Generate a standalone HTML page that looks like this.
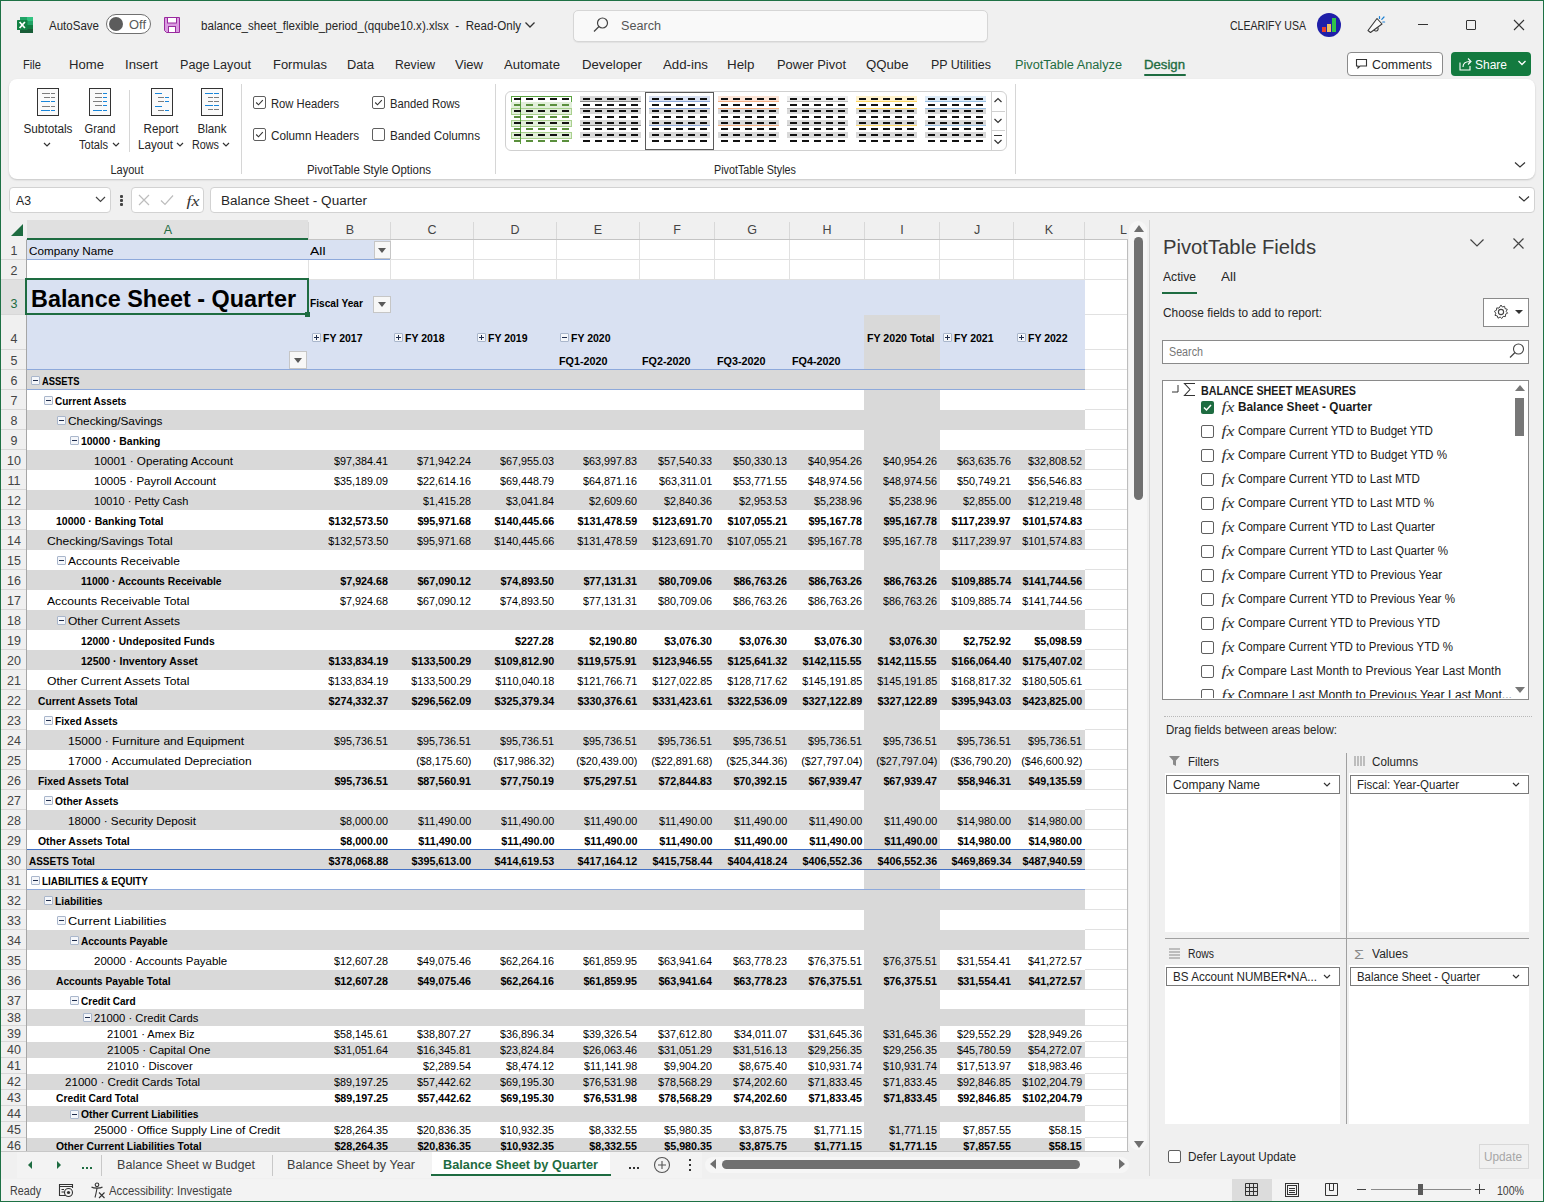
<!DOCTYPE html><html><head><meta charset="utf-8"><style>html,body{margin:0;padding:0;}body{width:1544px;height:1202px;overflow:hidden;position:relative;background:#f0f0f0;font-family:"Liberation Sans",sans-serif;}.t{position:absolute;line-height:40px;height:40px;white-space:pre;font-family:"Liberation Sans",sans-serif;}</style></head><body><svg style="position:absolute;left:17px;top:17px" width="17" height="16"><rect x="3" y="0" width="13" height="4" fill="#21a366"/><rect x="10" y="0" width="6" height="4" fill="#33c481"/><rect x="3" y="4" width="13" height="4" fill="#21a366"/><rect x="3" y="8" width="13" height="4" fill="#107c41"/><rect x="3" y="12" width="13" height="4" fill="#185c37"/><rect x="0" y="3" width="10.5" height="10" rx="0.6" fill="#118043"/><path d="M2.6 5 L7.9 11 M7.9 5 L2.6 11" stroke="#fff" stroke-width="1.7"/></svg><div class="t" style="left:49px;top:6px;font-size:12px;color:#262626;transform:scaleX(0.9607);transform-origin:left;">AutoSave</div><div style="position:absolute;left:106px;top:14px;width:43px;height:18px;border:1px solid #707070;border-radius:10px;background:#fff"></div><div style="position:absolute;left:109px;top:17px;width:14px;height:14px;background:#5c5c5c;border-radius:50%"></div><div class="t" style="left:129px;top:5px;font-size:12px;color:#5a5a5a;transform:scaleX(1.0762);transform-origin:left;">Off</div><svg style="position:absolute;left:163px;top:16px" width="18" height="18"><path d="M1.5 1.5 H16.5 V16.5 H3.5 L1.5 14.5 Z" fill="#d99be0" stroke="#9a2a9f" stroke-width="1"/><rect x="4.5" y="1.5" width="9" height="5.5" fill="#fff" stroke="#9a2a9f" stroke-width="1"/><rect x="5.5" y="10.5" width="7" height="6" fill="#fff" stroke="#9a2a9f" stroke-width="1"/></svg><div class="t" style="left:201px;top:6px;font-size:12px;color:#262626;transform:scaleX(0.9652);transform-origin:left;">balance_sheet_flexible_period_(qqube10.x).xlsx  -  Read-Only</div><svg style="position:absolute;left:524px;top:20px" width="12" height="10"><path d="M1.5 2.5 L6 7 L10.5 2.5" stroke="#333" stroke-width="1.3" fill="none"/></svg><div style="position:absolute;left:573px;top:10px;width:413px;height:30px;background:#f9f9f9;border:1px solid #d6d6d6;border-radius:5px;box-shadow:0 1px 1px rgba(0,0,0,0.06)"></div><svg style="position:absolute;left:592px;top:16px" width="18" height="18"><circle cx="10.5" cy="7" r="5" stroke="#444" stroke-width="1.2" fill="none"/><path d="M7 10.5 L2 15.5" stroke="#444" stroke-width="1.3"/></svg><div class="t" style="left:621px;top:6px;font-size:12.5px;color:#555;transform:scaleX(1.0099);transform-origin:left;">Search</div><div class="t" style="left:1230px;top:6px;font-size:12px;color:#262626;transform:scaleX(0.8788);transform-origin:left;">CLEARIFY USA</div><div style="position:absolute;left:1317px;top:13px;width:24px;height:24px;background:#1f1fa8;border-radius:50%"></div><div style="position:absolute;left:1322px;top:27px;width:4px;height:5px;background:#e8412c"></div><div style="position:absolute;left:1327px;top:24px;width:4px;height:8px;background:#f0c060"></div><div style="position:absolute;left:1332px;top:18px;width:4px;height:14px;background:#31c24a"></div><svg style="position:absolute;left:1366px;top:15px" width="22" height="20"><path d="M2 15.5 L11 3.5 L16 9 L4.5 17.5 Z" stroke="#3a3a3a" stroke-width="1.1" fill="#fafafa" stroke-linejoin="round"/><path d="M8 15 A1.9 1.9 0 1 0 11.8 12.6" stroke="#3a3a3a" stroke-width="1.1" fill="none"/><path d="M13.5 1.5 V3.5 M15.8 4.3 L18 2 M16.8 7 H18.6" stroke="#1a7fd4" stroke-width="1.2" stroke-linecap="round"/></svg><div style="position:absolute;left:1418px;top:24px;width:10px;height:1px;background:#333"></div><div style="position:absolute;left:1466px;top:20px;width:8px;height:8px;border:1px solid #333;border-radius:1px"></div><svg style="position:absolute;left:1513px;top:19px" width="12" height="12"><path d="M1 1 L11 11 M11 1 L1 11" stroke="#333" stroke-width="1.1"/></svg><div class="t" style="left:23px;top:45px;font-size:12.5px;color:#262626;transform:scaleX(0.8930);transform-origin:left;">File</div><div class="t" style="left:69px;top:45px;font-size:12.5px;color:#262626;transform:scaleX(1.0497);transform-origin:left;">Home</div><div class="t" style="left:125px;top:45px;font-size:12.5px;color:#262626;transform:scaleX(1.0555);transform-origin:left;">Insert</div><div class="t" style="left:180px;top:45px;font-size:12.5px;color:#262626;transform:scaleX(1.0114);transform-origin:left;">Page Layout</div><div class="t" style="left:273px;top:45px;font-size:12.5px;color:#262626;transform:scaleX(1.0366);transform-origin:left;">Formulas</div><div class="t" style="left:347px;top:45px;font-size:12.5px;color:#262626;transform:scaleX(1.0225);transform-origin:left;">Data</div><div class="t" style="left:395px;top:45px;font-size:12.5px;color:#262626;transform:scaleX(0.9756);transform-origin:left;">Review</div><div class="t" style="left:455px;top:45px;font-size:12.5px;color:#262626;transform:scaleX(1.0419);transform-origin:left;">View</div><div class="t" style="left:504px;top:45px;font-size:12.5px;color:#262626;transform:scaleX(1.0464);transform-origin:left;">Automate</div><div class="t" style="left:582px;top:45px;font-size:12.5px;color:#262626;transform:scaleX(1.0529);transform-origin:left;">Developer</div><div class="t" style="left:663px;top:45px;font-size:12.5px;color:#262626;transform:scaleX(1.0616);transform-origin:left;">Add-ins</div><div class="t" style="left:727px;top:45px;font-size:12.5px;color:#262626;transform:scaleX(1.0693);transform-origin:left;">Help</div><div class="t" style="left:777px;top:45px;font-size:12.5px;color:#262626;transform:scaleX(1.0344);transform-origin:left;">Power Pivot</div><div class="t" style="left:866px;top:45px;font-size:12.5px;color:#262626;transform:scaleX(1.0543);transform-origin:left;">QQube</div><div class="t" style="left:931px;top:45px;font-size:12.5px;color:#262626;transform:scaleX(0.9964);transform-origin:left;">PP Utilities</div><div class="t" style="left:1015px;top:45px;font-size:12.5px;color:#1e6c41;transform:scaleX(1.0197);transform-origin:left;">PivotTable Analyze</div><div class="t" style="left:1144px;top:45px;font-size:12.5px;color:#1e6c41;transform:scaleX(1.0534);transform-origin:left;-webkit-text-stroke:0.35px #1e6c41;">Design</div><div style="position:absolute;left:1144px;top:74px;width:42px;height:2px;background:#1e6c41;border-radius:1px"></div><div style="position:absolute;left:1347px;top:52px;width:94px;height:22px;background:#fff;border:1px solid #8a8a8a;border-radius:4px"></div><svg style="position:absolute;left:1355px;top:57px" width="14" height="14"><path d="M1.5 2.5 H11.5 V9 H5 L3 11 V9 H1.5 Z" stroke="#333" stroke-width="1.1" fill="none"/></svg><div class="t" style="left:1372px;top:45px;font-size:12.5px;color:#262626;transform:scaleX(0.9928);transform-origin:left;">Comments</div><div style="position:absolute;left:1451px;top:52px;width:80px;height:24px;background:#137a3f;border-radius:4px"></div><svg style="position:absolute;left:1458px;top:56px" width="16" height="16"><path d="M2 6.5 V14 H12 V10" stroke="#fff" stroke-width="1.1" fill="none"/><path d="M5 11 C5 7 8 5.5 12 5.5 M10 2.5 L13 5.5 L10 8.5" stroke="#fff" stroke-width="1.1" fill="none"/></svg><div class="t" style="left:1475px;top:45px;font-size:12.5px;color:#fff;transform:scaleX(0.9593);transform-origin:left;">Share</div><svg style="position:absolute;left:1517px;top:59px" width="10" height="8"><path d="M1.5 2 L5 5.5 L8.5 2" stroke="#fff" stroke-width="1.3" fill="none"/></svg><div style="position:absolute;left:9px;top:79px;width:1526px;height:100px;background:#fff;border-radius:8px;box-shadow:0 1px 2px rgba(0,0,0,0.18)"></div><div style="position:absolute;left:37px;top:88px;width:20px;height:26px;background:#fafafa;border:1px solid #333"></div><div style="position:absolute;left:42px;top:93px;width:8px;height:1px;background:#7d7d7d"></div><div style="position:absolute;left:51px;top:93px;width:4px;height:1px;background:#7d7d7d"></div><div style="position:absolute;left:44px;top:97px;width:6px;height:1px;background:#7d7d7d"></div><div style="position:absolute;left:51px;top:97px;width:4px;height:1px;background:#7d7d7d"></div><div style="position:absolute;left:41px;top:101px;width:9px;height:1px;background:#1a86d9"></div><div style="position:absolute;left:51px;top:101px;width:4px;height:1px;background:#1a86d9"></div><div style="position:absolute;left:42px;top:106px;width:8px;height:1px;background:#7d7d7d"></div><div style="position:absolute;left:51px;top:106px;width:4px;height:1px;background:#7d7d7d"></div><div style="position:absolute;left:41px;top:110px;width:9px;height:1px;background:#1a86d9"></div><div style="position:absolute;left:51px;top:110px;width:4px;height:1px;background:#1a86d9"></div><div style="position:absolute;left:89px;top:88px;width:20px;height:26px;background:#fafafa;border:1px solid #333"></div><div style="position:absolute;left:95px;top:93px;width:7px;height:1px;background:#7d7d7d"></div><div style="position:absolute;left:103px;top:93px;width:4px;height:1px;background:#1a86d9"></div><div style="position:absolute;left:95px;top:97px;width:7px;height:1px;background:#7d7d7d"></div><div style="position:absolute;left:103px;top:97px;width:4px;height:1px;background:#1a86d9"></div><div style="position:absolute;left:93px;top:101px;width:9px;height:1px;background:#7d7d7d"></div><div style="position:absolute;left:103px;top:101px;width:4px;height:1px;background:#1a86d9"></div><div style="position:absolute;left:95px;top:105px;width:7px;height:1px;background:#7d7d7d"></div><div style="position:absolute;left:103px;top:105px;width:4px;height:1px;background:#1a86d9"></div><div style="position:absolute;left:93px;top:110px;width:9px;height:1px;background:#1a86d9"></div><div style="position:absolute;left:103px;top:110px;width:4px;height:1px;background:#1a86d9"></div><div style="position:absolute;left:151px;top:88px;width:20px;height:26px;background:#fafafa;border:1px solid #333"></div><div style="position:absolute;left:155px;top:93px;width:7px;height:1px;background:#1a86d9"></div><div style="position:absolute;left:158px;top:97px;width:6px;height:1px;background:#7d7d7d"></div><div style="position:absolute;left:165px;top:97px;width:4px;height:1px;background:#1a86d9"></div><div style="position:absolute;left:158px;top:101px;width:6px;height:1px;background:#7d7d7d"></div><div style="position:absolute;left:165px;top:101px;width:4px;height:1px;background:#1a86d9"></div><div style="position:absolute;left:155px;top:106px;width:7px;height:1px;background:#1a86d9"></div><div style="position:absolute;left:158px;top:110px;width:6px;height:1px;background:#7d7d7d"></div><div style="position:absolute;left:165px;top:110px;width:4px;height:1px;background:#1a86d9"></div><div style="position:absolute;left:201px;top:88px;width:20px;height:26px;background:#fafafa;border:1px solid #333"></div><div style="position:absolute;left:205px;top:93px;width:8px;height:1px;background:#1a86d9"></div><div style="position:absolute;left:214px;top:93px;width:5px;height:1px;background:#1a86d9"></div><div style="position:absolute;left:208px;top:97px;width:5px;height:1px;background:#7d7d7d"></div><div style="position:absolute;left:214px;top:97px;width:5px;height:1px;background:#7d7d7d"></div><div style="position:absolute;left:208px;top:101px;width:5px;height:1px;background:#7d7d7d"></div><div style="position:absolute;left:214px;top:101px;width:5px;height:1px;background:#7d7d7d"></div><div style="position:absolute;left:205px;top:105px;width:8px;height:1px;background:#1a86d9"></div><div style="position:absolute;left:214px;top:105px;width:5px;height:1px;background:#1a86d9"></div><div style="position:absolute;left:208px;top:109px;width:5px;height:1px;background:#7d7d7d"></div><div style="position:absolute;left:214px;top:109px;width:5px;height:1px;background:#7d7d7d"></div><div style="position:absolute;left:129px;top:90px;width:1px;height:62px;background:#d6d6d6"></div><div class="t" style="left:-252px;width:600px;text-align:center;top:109px;font-size:12px;color:#262626;transform:scaleX(0.9791);transform-origin:center;">Subtotals</div><svg style="position:absolute;left:43px;top:142px" width="8" height="6"><path d="M1 1 L4.0 4.0 L7 1" stroke="#333" stroke-width="1.2" fill="none"/></svg><div class="t" style="left:-200px;width:600px;text-align:center;top:109px;font-size:12px;color:#262626;transform:scaleX(0.9293);transform-origin:center;">Grand</div><div class="t" style="left:79px;top:125px;font-size:12px;color:#262626;transform:scaleX(0.9248);transform-origin:left;">Totals</div><svg style="position:absolute;left:112px;top:142px" width="8" height="6"><path d="M1 1 L4.0 4.0 L7 1" stroke="#333" stroke-width="1.2" fill="none"/></svg><div class="t" style="left:-139px;width:600px;text-align:center;top:109px;font-size:12px;color:#262626;transform:scaleX(0.9714);transform-origin:center;">Report</div><div class="t" style="left:138px;top:125px;font-size:12px;color:#262626;transform:scaleX(0.9714);transform-origin:left;">Layout</div><svg style="position:absolute;left:176px;top:142px" width="8" height="6"><path d="M1 1 L4.0 4.0 L7 1" stroke="#333" stroke-width="1.2" fill="none"/></svg><div class="t" style="left:-88px;width:600px;text-align:center;top:109px;font-size:12px;color:#262626;transform:scaleX(0.9657);transform-origin:center;">Blank</div><div class="t" style="left:192px;top:125px;font-size:12px;color:#262626;transform:scaleX(0.8995);transform-origin:left;">Rows</div><svg style="position:absolute;left:222px;top:142px" width="8" height="6"><path d="M1 1 L4.0 4.0 L7 1" stroke="#333" stroke-width="1.2" fill="none"/></svg><div class="t" style="left:-173px;width:600px;text-align:center;top:150px;font-size:12px;color:#262626;transform:scaleX(0.9159);transform-origin:center;">Layout</div><div style="position:absolute;left:241px;top:84px;width:1px;height:90px;background:#d6d6d6"></div><div style="position:absolute;left:253px;top:96px;width:11px;height:11px;border:1px solid #5f5f5f;border-radius:2px;background:#fff"></div><svg style="position:absolute;left:253px;top:96px" width="13" height="13"><path d="M3.2 6.5 L5.5 8.8 L9.8 4.2" stroke="#333" stroke-width="1.1" fill="none"/></svg><div class="t" style="left:271px;top:84px;font-size:12px;color:#262626;transform:scaleX(0.9353);transform-origin:left;">Row Headers</div><div style="position:absolute;left:253px;top:128px;width:11px;height:11px;border:1px solid #5f5f5f;border-radius:2px;background:#fff"></div><svg style="position:absolute;left:253px;top:128px" width="13" height="13"><path d="M3.2 6.5 L5.5 8.8 L9.8 4.2" stroke="#333" stroke-width="1.1" fill="none"/></svg><div class="t" style="left:271px;top:116px;font-size:12px;color:#262626;transform:scaleX(0.9773);transform-origin:left;">Column Headers</div><div style="position:absolute;left:372px;top:96px;width:11px;height:11px;border:1px solid #5f5f5f;border-radius:2px;background:#fff"></div><svg style="position:absolute;left:372px;top:96px" width="13" height="13"><path d="M3.2 6.5 L5.5 8.8 L9.8 4.2" stroke="#333" stroke-width="1.1" fill="none"/></svg><div class="t" style="left:390px;top:84px;font-size:12px;color:#262626;transform:scaleX(0.9368);transform-origin:left;">Banded Rows</div><div style="position:absolute;left:372px;top:128px;width:11px;height:11px;border:1px solid #5f5f5f;border-radius:2px;background:#fff"></div><div class="t" style="left:390px;top:116px;font-size:12px;color:#262626;transform:scaleX(0.9776);transform-origin:left;">Banded Columns</div><div class="t" style="left:69px;width:600px;text-align:center;top:150px;font-size:12px;color:#262626;transform:scaleX(0.9533);transform-origin:center;">PivotTable Style Options</div><div style="position:absolute;left:495px;top:84px;width:1px;height:90px;background:#d6d6d6"></div><div style="position:absolute;left:505px;top:91px;width:500px;height:58px;border:1px solid #d0d0d0;border-radius:6px;background:#fff"></div><div style="position:absolute;left:511px;top:96px;width:59px;height:5px;border:1px solid #5aa33f;background:#fff"></div><div style="position:absolute;left:511px;top:108px;width:59px;height:5px;border:1px solid #a9d08e;background:#e2efda"></div><div style="position:absolute;left:511px;top:120px;width:59px;height:5px;border:1px solid #a9d08e;background:#e2efda"></div><div style="position:absolute;left:511px;top:132px;width:59px;height:5px;border:1px solid #a9d08e;background:#e2efda"></div><div style="position:absolute;left:511px;top:102px;width:61px;height:6px;background:#e2efda"></div><div style="position:absolute;left:520px;top:96px;width:1px;height:48px;background:#5aa33f"></div><div style="position:absolute;left:514px;top:98px;width:7px;height:2px;background:#111"></div><div style="position:absolute;left:526px;top:98px;width:7px;height:2px;background:#111"></div><div style="position:absolute;left:538px;top:98px;width:7px;height:2px;background:#111"></div><div style="position:absolute;left:550px;top:98px;width:7px;height:2px;background:#111"></div><div style="position:absolute;left:562px;top:98px;width:7px;height:2px;background:#111"></div><div style="position:absolute;left:514px;top:104px;width:7px;height:2px;background:#5a8f3c"></div><div style="position:absolute;left:526px;top:104px;width:7px;height:2px;background:#5a8f3c"></div><div style="position:absolute;left:538px;top:104px;width:7px;height:2px;background:#5a8f3c"></div><div style="position:absolute;left:550px;top:104px;width:7px;height:2px;background:#5a8f3c"></div><div style="position:absolute;left:562px;top:104px;width:7px;height:2px;background:#5a8f3c"></div><div style="position:absolute;left:514px;top:110px;width:7px;height:2px;background:#111"></div><div style="position:absolute;left:526px;top:110px;width:7px;height:2px;background:#111"></div><div style="position:absolute;left:538px;top:110px;width:7px;height:2px;background:#111"></div><div style="position:absolute;left:550px;top:110px;width:7px;height:2px;background:#111"></div><div style="position:absolute;left:562px;top:110px;width:7px;height:2px;background:#111"></div><div style="position:absolute;left:514px;top:116px;width:7px;height:2px;background:#5a8f3c"></div><div style="position:absolute;left:526px;top:116px;width:7px;height:2px;background:#5a8f3c"></div><div style="position:absolute;left:538px;top:116px;width:7px;height:2px;background:#5a8f3c"></div><div style="position:absolute;left:550px;top:116px;width:7px;height:2px;background:#5a8f3c"></div><div style="position:absolute;left:562px;top:116px;width:7px;height:2px;background:#5a8f3c"></div><div style="position:absolute;left:514px;top:122px;width:7px;height:2px;background:#111"></div><div style="position:absolute;left:526px;top:122px;width:7px;height:2px;background:#111"></div><div style="position:absolute;left:538px;top:122px;width:7px;height:2px;background:#111"></div><div style="position:absolute;left:550px;top:122px;width:7px;height:2px;background:#111"></div><div style="position:absolute;left:562px;top:122px;width:7px;height:2px;background:#111"></div><div style="position:absolute;left:514px;top:128px;width:7px;height:2px;background:#5a8f3c"></div><div style="position:absolute;left:526px;top:128px;width:7px;height:2px;background:#5a8f3c"></div><div style="position:absolute;left:538px;top:128px;width:7px;height:2px;background:#5a8f3c"></div><div style="position:absolute;left:550px;top:128px;width:7px;height:2px;background:#5a8f3c"></div><div style="position:absolute;left:562px;top:128px;width:7px;height:2px;background:#5a8f3c"></div><div style="position:absolute;left:514px;top:134px;width:7px;height:2px;background:#111"></div><div style="position:absolute;left:526px;top:134px;width:7px;height:2px;background:#111"></div><div style="position:absolute;left:538px;top:134px;width:7px;height:2px;background:#111"></div><div style="position:absolute;left:550px;top:134px;width:7px;height:2px;background:#111"></div><div style="position:absolute;left:562px;top:134px;width:7px;height:2px;background:#111"></div><div style="position:absolute;left:514px;top:140px;width:7px;height:2px;background:#5a8f3c"></div><div style="position:absolute;left:526px;top:140px;width:7px;height:2px;background:#5a8f3c"></div><div style="position:absolute;left:538px;top:140px;width:7px;height:2px;background:#5a8f3c"></div><div style="position:absolute;left:550px;top:140px;width:7px;height:2px;background:#5a8f3c"></div><div style="position:absolute;left:562px;top:140px;width:7px;height:2px;background:#5a8f3c"></div><div style="position:absolute;left:580px;top:96px;width:61px;height:6px;background:#d9d9d9"></div><div style="position:absolute;left:580px;top:108px;width:61px;height:6px;background:#d9d9d9"></div><div style="position:absolute;left:580px;top:120px;width:61px;height:6px;background:#d9d9d9"></div><div style="position:absolute;left:580px;top:132px;width:61px;height:6px;background:#d9d9d9"></div><div style="position:absolute;left:580px;top:101px;width:61px;height:1px;background:#8c8c8c"></div><div style="position:absolute;left:580px;top:108px;width:61px;height:1px;background:#8c8c8c"></div><div style="position:absolute;left:580px;top:125px;width:61px;height:1px;background:#8c8c8c"></div><div style="position:absolute;left:583px;top:98px;width:7px;height:2px;background:#111"></div><div style="position:absolute;left:595px;top:98px;width:7px;height:2px;background:#111"></div><div style="position:absolute;left:607px;top:98px;width:7px;height:2px;background:#111"></div><div style="position:absolute;left:619px;top:98px;width:7px;height:2px;background:#111"></div><div style="position:absolute;left:631px;top:98px;width:7px;height:2px;background:#111"></div><div style="position:absolute;left:583px;top:104px;width:7px;height:2px;background:#111"></div><div style="position:absolute;left:595px;top:104px;width:7px;height:2px;background:#111"></div><div style="position:absolute;left:607px;top:104px;width:7px;height:2px;background:#111"></div><div style="position:absolute;left:619px;top:104px;width:7px;height:2px;background:#111"></div><div style="position:absolute;left:631px;top:104px;width:7px;height:2px;background:#111"></div><div style="position:absolute;left:583px;top:110px;width:7px;height:2px;background:#111"></div><div style="position:absolute;left:595px;top:110px;width:7px;height:2px;background:#111"></div><div style="position:absolute;left:607px;top:110px;width:7px;height:2px;background:#111"></div><div style="position:absolute;left:619px;top:110px;width:7px;height:2px;background:#111"></div><div style="position:absolute;left:631px;top:110px;width:7px;height:2px;background:#111"></div><div style="position:absolute;left:583px;top:116px;width:7px;height:2px;background:#111"></div><div style="position:absolute;left:595px;top:116px;width:7px;height:2px;background:#111"></div><div style="position:absolute;left:607px;top:116px;width:7px;height:2px;background:#111"></div><div style="position:absolute;left:619px;top:116px;width:7px;height:2px;background:#111"></div><div style="position:absolute;left:631px;top:116px;width:7px;height:2px;background:#111"></div><div style="position:absolute;left:583px;top:122px;width:7px;height:2px;background:#111"></div><div style="position:absolute;left:595px;top:122px;width:7px;height:2px;background:#111"></div><div style="position:absolute;left:607px;top:122px;width:7px;height:2px;background:#111"></div><div style="position:absolute;left:619px;top:122px;width:7px;height:2px;background:#111"></div><div style="position:absolute;left:631px;top:122px;width:7px;height:2px;background:#111"></div><div style="position:absolute;left:583px;top:128px;width:7px;height:2px;background:#111"></div><div style="position:absolute;left:595px;top:128px;width:7px;height:2px;background:#111"></div><div style="position:absolute;left:607px;top:128px;width:7px;height:2px;background:#111"></div><div style="position:absolute;left:619px;top:128px;width:7px;height:2px;background:#111"></div><div style="position:absolute;left:631px;top:128px;width:7px;height:2px;background:#111"></div><div style="position:absolute;left:583px;top:134px;width:7px;height:2px;background:#111"></div><div style="position:absolute;left:595px;top:134px;width:7px;height:2px;background:#111"></div><div style="position:absolute;left:607px;top:134px;width:7px;height:2px;background:#111"></div><div style="position:absolute;left:619px;top:134px;width:7px;height:2px;background:#111"></div><div style="position:absolute;left:631px;top:134px;width:7px;height:2px;background:#111"></div><div style="position:absolute;left:583px;top:140px;width:7px;height:2px;background:#111"></div><div style="position:absolute;left:595px;top:140px;width:7px;height:2px;background:#111"></div><div style="position:absolute;left:607px;top:140px;width:7px;height:2px;background:#111"></div><div style="position:absolute;left:619px;top:140px;width:7px;height:2px;background:#111"></div><div style="position:absolute;left:631px;top:140px;width:7px;height:2px;background:#111"></div><div style="position:absolute;left:649px;top:96px;width:61px;height:6px;background:#d9e1f2"></div><div style="position:absolute;left:649px;top:108px;width:61px;height:6px;background:#d9d9d9"></div><div style="position:absolute;left:649px;top:120px;width:61px;height:6px;background:#d9d9d9"></div><div style="position:absolute;left:649px;top:132px;width:61px;height:6px;background:#d9d9d9"></div><div style="position:absolute;left:649px;top:101px;width:61px;height:1px;background:#8ea9db"></div><div style="position:absolute;left:649px;top:108px;width:61px;height:1px;background:#8ea9db"></div><div style="position:absolute;left:649px;top:125px;width:61px;height:1px;background:#8ea9db"></div><div style="position:absolute;left:652px;top:98px;width:7px;height:2px;background:#111"></div><div style="position:absolute;left:664px;top:98px;width:7px;height:2px;background:#111"></div><div style="position:absolute;left:676px;top:98px;width:7px;height:2px;background:#111"></div><div style="position:absolute;left:688px;top:98px;width:7px;height:2px;background:#111"></div><div style="position:absolute;left:700px;top:98px;width:7px;height:2px;background:#111"></div><div style="position:absolute;left:652px;top:104px;width:7px;height:2px;background:#111"></div><div style="position:absolute;left:664px;top:104px;width:7px;height:2px;background:#111"></div><div style="position:absolute;left:676px;top:104px;width:7px;height:2px;background:#111"></div><div style="position:absolute;left:688px;top:104px;width:7px;height:2px;background:#111"></div><div style="position:absolute;left:700px;top:104px;width:7px;height:2px;background:#111"></div><div style="position:absolute;left:652px;top:110px;width:7px;height:2px;background:#111"></div><div style="position:absolute;left:664px;top:110px;width:7px;height:2px;background:#111"></div><div style="position:absolute;left:676px;top:110px;width:7px;height:2px;background:#111"></div><div style="position:absolute;left:688px;top:110px;width:7px;height:2px;background:#111"></div><div style="position:absolute;left:700px;top:110px;width:7px;height:2px;background:#111"></div><div style="position:absolute;left:652px;top:116px;width:7px;height:2px;background:#111"></div><div style="position:absolute;left:664px;top:116px;width:7px;height:2px;background:#111"></div><div style="position:absolute;left:676px;top:116px;width:7px;height:2px;background:#111"></div><div style="position:absolute;left:688px;top:116px;width:7px;height:2px;background:#111"></div><div style="position:absolute;left:700px;top:116px;width:7px;height:2px;background:#111"></div><div style="position:absolute;left:652px;top:122px;width:7px;height:2px;background:#111"></div><div style="position:absolute;left:664px;top:122px;width:7px;height:2px;background:#111"></div><div style="position:absolute;left:676px;top:122px;width:7px;height:2px;background:#111"></div><div style="position:absolute;left:688px;top:122px;width:7px;height:2px;background:#111"></div><div style="position:absolute;left:700px;top:122px;width:7px;height:2px;background:#111"></div><div style="position:absolute;left:652px;top:128px;width:7px;height:2px;background:#111"></div><div style="position:absolute;left:664px;top:128px;width:7px;height:2px;background:#111"></div><div style="position:absolute;left:676px;top:128px;width:7px;height:2px;background:#111"></div><div style="position:absolute;left:688px;top:128px;width:7px;height:2px;background:#111"></div><div style="position:absolute;left:700px;top:128px;width:7px;height:2px;background:#111"></div><div style="position:absolute;left:652px;top:134px;width:7px;height:2px;background:#111"></div><div style="position:absolute;left:664px;top:134px;width:7px;height:2px;background:#111"></div><div style="position:absolute;left:676px;top:134px;width:7px;height:2px;background:#111"></div><div style="position:absolute;left:688px;top:134px;width:7px;height:2px;background:#111"></div><div style="position:absolute;left:700px;top:134px;width:7px;height:2px;background:#111"></div><div style="position:absolute;left:652px;top:140px;width:7px;height:2px;background:#111"></div><div style="position:absolute;left:664px;top:140px;width:7px;height:2px;background:#111"></div><div style="position:absolute;left:676px;top:140px;width:7px;height:2px;background:#111"></div><div style="position:absolute;left:688px;top:140px;width:7px;height:2px;background:#111"></div><div style="position:absolute;left:700px;top:140px;width:7px;height:2px;background:#111"></div><div style="position:absolute;left:718px;top:96px;width:61px;height:6px;background:#fce4d6"></div><div style="position:absolute;left:718px;top:108px;width:61px;height:6px;background:#d9d9d9"></div><div style="position:absolute;left:718px;top:120px;width:61px;height:6px;background:#d9d9d9"></div><div style="position:absolute;left:718px;top:132px;width:61px;height:6px;background:#d9d9d9"></div><div style="position:absolute;left:718px;top:101px;width:61px;height:1px;background:#f4b084"></div><div style="position:absolute;left:718px;top:108px;width:61px;height:1px;background:#f4b084"></div><div style="position:absolute;left:718px;top:125px;width:61px;height:1px;background:#f4b084"></div><div style="position:absolute;left:721px;top:98px;width:7px;height:2px;background:#111"></div><div style="position:absolute;left:733px;top:98px;width:7px;height:2px;background:#111"></div><div style="position:absolute;left:745px;top:98px;width:7px;height:2px;background:#111"></div><div style="position:absolute;left:757px;top:98px;width:7px;height:2px;background:#111"></div><div style="position:absolute;left:769px;top:98px;width:7px;height:2px;background:#111"></div><div style="position:absolute;left:721px;top:104px;width:7px;height:2px;background:#111"></div><div style="position:absolute;left:733px;top:104px;width:7px;height:2px;background:#111"></div><div style="position:absolute;left:745px;top:104px;width:7px;height:2px;background:#111"></div><div style="position:absolute;left:757px;top:104px;width:7px;height:2px;background:#111"></div><div style="position:absolute;left:769px;top:104px;width:7px;height:2px;background:#111"></div><div style="position:absolute;left:721px;top:110px;width:7px;height:2px;background:#111"></div><div style="position:absolute;left:733px;top:110px;width:7px;height:2px;background:#111"></div><div style="position:absolute;left:745px;top:110px;width:7px;height:2px;background:#111"></div><div style="position:absolute;left:757px;top:110px;width:7px;height:2px;background:#111"></div><div style="position:absolute;left:769px;top:110px;width:7px;height:2px;background:#111"></div><div style="position:absolute;left:721px;top:116px;width:7px;height:2px;background:#111"></div><div style="position:absolute;left:733px;top:116px;width:7px;height:2px;background:#111"></div><div style="position:absolute;left:745px;top:116px;width:7px;height:2px;background:#111"></div><div style="position:absolute;left:757px;top:116px;width:7px;height:2px;background:#111"></div><div style="position:absolute;left:769px;top:116px;width:7px;height:2px;background:#111"></div><div style="position:absolute;left:721px;top:122px;width:7px;height:2px;background:#111"></div><div style="position:absolute;left:733px;top:122px;width:7px;height:2px;background:#111"></div><div style="position:absolute;left:745px;top:122px;width:7px;height:2px;background:#111"></div><div style="position:absolute;left:757px;top:122px;width:7px;height:2px;background:#111"></div><div style="position:absolute;left:769px;top:122px;width:7px;height:2px;background:#111"></div><div style="position:absolute;left:721px;top:128px;width:7px;height:2px;background:#111"></div><div style="position:absolute;left:733px;top:128px;width:7px;height:2px;background:#111"></div><div style="position:absolute;left:745px;top:128px;width:7px;height:2px;background:#111"></div><div style="position:absolute;left:757px;top:128px;width:7px;height:2px;background:#111"></div><div style="position:absolute;left:769px;top:128px;width:7px;height:2px;background:#111"></div><div style="position:absolute;left:721px;top:134px;width:7px;height:2px;background:#111"></div><div style="position:absolute;left:733px;top:134px;width:7px;height:2px;background:#111"></div><div style="position:absolute;left:745px;top:134px;width:7px;height:2px;background:#111"></div><div style="position:absolute;left:757px;top:134px;width:7px;height:2px;background:#111"></div><div style="position:absolute;left:769px;top:134px;width:7px;height:2px;background:#111"></div><div style="position:absolute;left:721px;top:140px;width:7px;height:2px;background:#111"></div><div style="position:absolute;left:733px;top:140px;width:7px;height:2px;background:#111"></div><div style="position:absolute;left:745px;top:140px;width:7px;height:2px;background:#111"></div><div style="position:absolute;left:757px;top:140px;width:7px;height:2px;background:#111"></div><div style="position:absolute;left:769px;top:140px;width:7px;height:2px;background:#111"></div><div style="position:absolute;left:787px;top:96px;width:61px;height:6px;background:#ededed"></div><div style="position:absolute;left:787px;top:108px;width:61px;height:6px;background:#d9d9d9"></div><div style="position:absolute;left:787px;top:120px;width:61px;height:6px;background:#d9d9d9"></div><div style="position:absolute;left:787px;top:132px;width:61px;height:6px;background:#d9d9d9"></div><div style="position:absolute;left:787px;top:101px;width:61px;height:1px;background:#bfbfbf"></div><div style="position:absolute;left:787px;top:108px;width:61px;height:1px;background:#bfbfbf"></div><div style="position:absolute;left:787px;top:125px;width:61px;height:1px;background:#bfbfbf"></div><div style="position:absolute;left:790px;top:98px;width:7px;height:2px;background:#111"></div><div style="position:absolute;left:802px;top:98px;width:7px;height:2px;background:#111"></div><div style="position:absolute;left:814px;top:98px;width:7px;height:2px;background:#111"></div><div style="position:absolute;left:826px;top:98px;width:7px;height:2px;background:#111"></div><div style="position:absolute;left:838px;top:98px;width:7px;height:2px;background:#111"></div><div style="position:absolute;left:790px;top:104px;width:7px;height:2px;background:#111"></div><div style="position:absolute;left:802px;top:104px;width:7px;height:2px;background:#111"></div><div style="position:absolute;left:814px;top:104px;width:7px;height:2px;background:#111"></div><div style="position:absolute;left:826px;top:104px;width:7px;height:2px;background:#111"></div><div style="position:absolute;left:838px;top:104px;width:7px;height:2px;background:#111"></div><div style="position:absolute;left:790px;top:110px;width:7px;height:2px;background:#111"></div><div style="position:absolute;left:802px;top:110px;width:7px;height:2px;background:#111"></div><div style="position:absolute;left:814px;top:110px;width:7px;height:2px;background:#111"></div><div style="position:absolute;left:826px;top:110px;width:7px;height:2px;background:#111"></div><div style="position:absolute;left:838px;top:110px;width:7px;height:2px;background:#111"></div><div style="position:absolute;left:790px;top:116px;width:7px;height:2px;background:#111"></div><div style="position:absolute;left:802px;top:116px;width:7px;height:2px;background:#111"></div><div style="position:absolute;left:814px;top:116px;width:7px;height:2px;background:#111"></div><div style="position:absolute;left:826px;top:116px;width:7px;height:2px;background:#111"></div><div style="position:absolute;left:838px;top:116px;width:7px;height:2px;background:#111"></div><div style="position:absolute;left:790px;top:122px;width:7px;height:2px;background:#111"></div><div style="position:absolute;left:802px;top:122px;width:7px;height:2px;background:#111"></div><div style="position:absolute;left:814px;top:122px;width:7px;height:2px;background:#111"></div><div style="position:absolute;left:826px;top:122px;width:7px;height:2px;background:#111"></div><div style="position:absolute;left:838px;top:122px;width:7px;height:2px;background:#111"></div><div style="position:absolute;left:790px;top:128px;width:7px;height:2px;background:#111"></div><div style="position:absolute;left:802px;top:128px;width:7px;height:2px;background:#111"></div><div style="position:absolute;left:814px;top:128px;width:7px;height:2px;background:#111"></div><div style="position:absolute;left:826px;top:128px;width:7px;height:2px;background:#111"></div><div style="position:absolute;left:838px;top:128px;width:7px;height:2px;background:#111"></div><div style="position:absolute;left:790px;top:134px;width:7px;height:2px;background:#111"></div><div style="position:absolute;left:802px;top:134px;width:7px;height:2px;background:#111"></div><div style="position:absolute;left:814px;top:134px;width:7px;height:2px;background:#111"></div><div style="position:absolute;left:826px;top:134px;width:7px;height:2px;background:#111"></div><div style="position:absolute;left:838px;top:134px;width:7px;height:2px;background:#111"></div><div style="position:absolute;left:790px;top:140px;width:7px;height:2px;background:#111"></div><div style="position:absolute;left:802px;top:140px;width:7px;height:2px;background:#111"></div><div style="position:absolute;left:814px;top:140px;width:7px;height:2px;background:#111"></div><div style="position:absolute;left:826px;top:140px;width:7px;height:2px;background:#111"></div><div style="position:absolute;left:838px;top:140px;width:7px;height:2px;background:#111"></div><div style="position:absolute;left:856px;top:96px;width:61px;height:6px;background:#fff2cc"></div><div style="position:absolute;left:856px;top:108px;width:61px;height:6px;background:#d9d9d9"></div><div style="position:absolute;left:856px;top:120px;width:61px;height:6px;background:#d9d9d9"></div><div style="position:absolute;left:856px;top:132px;width:61px;height:6px;background:#d9d9d9"></div><div style="position:absolute;left:856px;top:101px;width:61px;height:1px;background:#ffd966"></div><div style="position:absolute;left:856px;top:108px;width:61px;height:1px;background:#ffd966"></div><div style="position:absolute;left:856px;top:125px;width:61px;height:1px;background:#ffd966"></div><div style="position:absolute;left:859px;top:98px;width:7px;height:2px;background:#111"></div><div style="position:absolute;left:871px;top:98px;width:7px;height:2px;background:#111"></div><div style="position:absolute;left:883px;top:98px;width:7px;height:2px;background:#111"></div><div style="position:absolute;left:895px;top:98px;width:7px;height:2px;background:#111"></div><div style="position:absolute;left:907px;top:98px;width:7px;height:2px;background:#111"></div><div style="position:absolute;left:859px;top:104px;width:7px;height:2px;background:#111"></div><div style="position:absolute;left:871px;top:104px;width:7px;height:2px;background:#111"></div><div style="position:absolute;left:883px;top:104px;width:7px;height:2px;background:#111"></div><div style="position:absolute;left:895px;top:104px;width:7px;height:2px;background:#111"></div><div style="position:absolute;left:907px;top:104px;width:7px;height:2px;background:#111"></div><div style="position:absolute;left:859px;top:110px;width:7px;height:2px;background:#111"></div><div style="position:absolute;left:871px;top:110px;width:7px;height:2px;background:#111"></div><div style="position:absolute;left:883px;top:110px;width:7px;height:2px;background:#111"></div><div style="position:absolute;left:895px;top:110px;width:7px;height:2px;background:#111"></div><div style="position:absolute;left:907px;top:110px;width:7px;height:2px;background:#111"></div><div style="position:absolute;left:859px;top:116px;width:7px;height:2px;background:#111"></div><div style="position:absolute;left:871px;top:116px;width:7px;height:2px;background:#111"></div><div style="position:absolute;left:883px;top:116px;width:7px;height:2px;background:#111"></div><div style="position:absolute;left:895px;top:116px;width:7px;height:2px;background:#111"></div><div style="position:absolute;left:907px;top:116px;width:7px;height:2px;background:#111"></div><div style="position:absolute;left:859px;top:122px;width:7px;height:2px;background:#111"></div><div style="position:absolute;left:871px;top:122px;width:7px;height:2px;background:#111"></div><div style="position:absolute;left:883px;top:122px;width:7px;height:2px;background:#111"></div><div style="position:absolute;left:895px;top:122px;width:7px;height:2px;background:#111"></div><div style="position:absolute;left:907px;top:122px;width:7px;height:2px;background:#111"></div><div style="position:absolute;left:859px;top:128px;width:7px;height:2px;background:#111"></div><div style="position:absolute;left:871px;top:128px;width:7px;height:2px;background:#111"></div><div style="position:absolute;left:883px;top:128px;width:7px;height:2px;background:#111"></div><div style="position:absolute;left:895px;top:128px;width:7px;height:2px;background:#111"></div><div style="position:absolute;left:907px;top:128px;width:7px;height:2px;background:#111"></div><div style="position:absolute;left:859px;top:134px;width:7px;height:2px;background:#111"></div><div style="position:absolute;left:871px;top:134px;width:7px;height:2px;background:#111"></div><div style="position:absolute;left:883px;top:134px;width:7px;height:2px;background:#111"></div><div style="position:absolute;left:895px;top:134px;width:7px;height:2px;background:#111"></div><div style="position:absolute;left:907px;top:134px;width:7px;height:2px;background:#111"></div><div style="position:absolute;left:859px;top:140px;width:7px;height:2px;background:#111"></div><div style="position:absolute;left:871px;top:140px;width:7px;height:2px;background:#111"></div><div style="position:absolute;left:883px;top:140px;width:7px;height:2px;background:#111"></div><div style="position:absolute;left:895px;top:140px;width:7px;height:2px;background:#111"></div><div style="position:absolute;left:907px;top:140px;width:7px;height:2px;background:#111"></div><div style="position:absolute;left:925px;top:96px;width:61px;height:6px;background:#ddebf7"></div><div style="position:absolute;left:925px;top:108px;width:61px;height:6px;background:#d9d9d9"></div><div style="position:absolute;left:925px;top:120px;width:61px;height:6px;background:#d9d9d9"></div><div style="position:absolute;left:925px;top:132px;width:61px;height:6px;background:#d9d9d9"></div><div style="position:absolute;left:925px;top:101px;width:61px;height:1px;background:#9bc2e6"></div><div style="position:absolute;left:925px;top:108px;width:61px;height:1px;background:#9bc2e6"></div><div style="position:absolute;left:925px;top:125px;width:61px;height:1px;background:#9bc2e6"></div><div style="position:absolute;left:928px;top:98px;width:7px;height:2px;background:#111"></div><div style="position:absolute;left:940px;top:98px;width:7px;height:2px;background:#111"></div><div style="position:absolute;left:952px;top:98px;width:7px;height:2px;background:#111"></div><div style="position:absolute;left:964px;top:98px;width:7px;height:2px;background:#111"></div><div style="position:absolute;left:976px;top:98px;width:7px;height:2px;background:#111"></div><div style="position:absolute;left:928px;top:104px;width:7px;height:2px;background:#111"></div><div style="position:absolute;left:940px;top:104px;width:7px;height:2px;background:#111"></div><div style="position:absolute;left:952px;top:104px;width:7px;height:2px;background:#111"></div><div style="position:absolute;left:964px;top:104px;width:7px;height:2px;background:#111"></div><div style="position:absolute;left:976px;top:104px;width:7px;height:2px;background:#111"></div><div style="position:absolute;left:928px;top:110px;width:7px;height:2px;background:#111"></div><div style="position:absolute;left:940px;top:110px;width:7px;height:2px;background:#111"></div><div style="position:absolute;left:952px;top:110px;width:7px;height:2px;background:#111"></div><div style="position:absolute;left:964px;top:110px;width:7px;height:2px;background:#111"></div><div style="position:absolute;left:976px;top:110px;width:7px;height:2px;background:#111"></div><div style="position:absolute;left:928px;top:116px;width:7px;height:2px;background:#111"></div><div style="position:absolute;left:940px;top:116px;width:7px;height:2px;background:#111"></div><div style="position:absolute;left:952px;top:116px;width:7px;height:2px;background:#111"></div><div style="position:absolute;left:964px;top:116px;width:7px;height:2px;background:#111"></div><div style="position:absolute;left:976px;top:116px;width:7px;height:2px;background:#111"></div><div style="position:absolute;left:928px;top:122px;width:7px;height:2px;background:#111"></div><div style="position:absolute;left:940px;top:122px;width:7px;height:2px;background:#111"></div><div style="position:absolute;left:952px;top:122px;width:7px;height:2px;background:#111"></div><div style="position:absolute;left:964px;top:122px;width:7px;height:2px;background:#111"></div><div style="position:absolute;left:976px;top:122px;width:7px;height:2px;background:#111"></div><div style="position:absolute;left:928px;top:128px;width:7px;height:2px;background:#111"></div><div style="position:absolute;left:940px;top:128px;width:7px;height:2px;background:#111"></div><div style="position:absolute;left:952px;top:128px;width:7px;height:2px;background:#111"></div><div style="position:absolute;left:964px;top:128px;width:7px;height:2px;background:#111"></div><div style="position:absolute;left:976px;top:128px;width:7px;height:2px;background:#111"></div><div style="position:absolute;left:928px;top:134px;width:7px;height:2px;background:#111"></div><div style="position:absolute;left:940px;top:134px;width:7px;height:2px;background:#111"></div><div style="position:absolute;left:952px;top:134px;width:7px;height:2px;background:#111"></div><div style="position:absolute;left:964px;top:134px;width:7px;height:2px;background:#111"></div><div style="position:absolute;left:976px;top:134px;width:7px;height:2px;background:#111"></div><div style="position:absolute;left:928px;top:140px;width:7px;height:2px;background:#111"></div><div style="position:absolute;left:940px;top:140px;width:7px;height:2px;background:#111"></div><div style="position:absolute;left:952px;top:140px;width:7px;height:2px;background:#111"></div><div style="position:absolute;left:964px;top:140px;width:7px;height:2px;background:#111"></div><div style="position:absolute;left:976px;top:140px;width:7px;height:2px;background:#111"></div><div style="position:absolute;left:645px;top:92px;width:67px;height:56px;border:1px solid #5a5a5a"></div><div style="position:absolute;left:991px;top:91px;width:1px;height:60px;background:#d0d0d0"></div><div style="position:absolute;left:992px;top:111px;width:13px;height:1px;background:#d0d0d0"></div><div style="position:absolute;left:992px;top:130px;width:13px;height:1px;background:#d0d0d0"></div><svg style="position:absolute;left:993px;top:96px" width="10" height="8"><path d="M1.5 6 L5 2.5 L8.5 6" stroke="#333" stroke-width="1.2" fill="none"/></svg><svg style="position:absolute;left:993px;top:117px" width="10" height="8"><path d="M1.5 2 L5 5.5 L8.5 2" stroke="#333" stroke-width="1.2" fill="none"/></svg><svg style="position:absolute;left:993px;top:134px" width="10" height="12"><path d="M1 1.5 H9 M1.5 6 L5 9.5 L8.5 6" stroke="#333" stroke-width="1.2" fill="none"/></svg><div class="t" style="left:455px;width:600px;text-align:center;top:150px;font-size:12px;color:#262626;transform:scaleX(0.8972);transform-origin:center;">PivotTable Styles</div><div style="position:absolute;left:1015px;top:84px;width:1px;height:90px;background:#d6d6d6"></div><svg style="position:absolute;left:1514px;top:161px" width="12" height="8"><path d="M1 1.5 L6 6 L11 1.5" stroke="#333" stroke-width="1.2" fill="none"/></svg><div style="position:absolute;left:9px;top:187px;width:100px;height:24px;background:#fff;border:1px solid #d2d2d2;border-radius:4px"></div><div class="t" style="left:16px;top:181px;font-size:12.5px;color:#262626;transform:scaleX(0.9806);transform-origin:left;">A3</div><svg style="position:absolute;left:95px;top:196px" width="11" height="7"><path d="M1 1 L5.5 5.5 L10 1" stroke="#444" stroke-width="1.2" fill="none"/></svg><div style="position:absolute;left:120px;top:195px;width:3px;height:3px;background:#444;border-radius:1px"></div><div style="position:absolute;left:120px;top:199px;width:3px;height:3px;background:#444;border-radius:1px"></div><div style="position:absolute;left:120px;top:203px;width:3px;height:3px;background:#444;border-radius:1px"></div><div style="position:absolute;left:131px;top:187px;width:71px;height:24px;background:#fff;border:1px solid #d2d2d2;border-radius:4px"></div><svg style="position:absolute;left:137px;top:193px" width="14" height="14"><path d="M2 2 L12 12 M12 2 L2 12" stroke="#bdbdbd" stroke-width="1.2"/></svg><svg style="position:absolute;left:159px;top:193px" width="16" height="14"><path d="M2 7.5 L6 11.5 L14 2.5" stroke="#bdbdbd" stroke-width="1.2" fill="none"/></svg><div class="t" style="left:-107px;width:600px;text-align:center;top:182px;font-size:14px;color:#333;transform:scaleX(1.2855);transform-origin:center;font-family:Liberation Serif;font-style:italic;">fx</div><div style="position:absolute;left:210px;top:187px;width:1323px;height:24px;background:#fff;border:1px solid #d2d2d2;border-radius:4px"></div><div class="t" style="left:221px;top:181px;font-size:12.5px;color:#262626;transform:scaleX(1.0831);transform-origin:left;">Balance Sheet - Quarter</div><svg style="position:absolute;left:1518px;top:195px" width="12" height="8"><path d="M1 1.5 L6 6 L11 1.5" stroke="#333" stroke-width="1.2" fill="none"/></svg><div style="position:absolute;left:0px;top:220px;width:1128px;height:19px;background:#f0f0f0"></div><div style="position:absolute;left:27px;top:220px;width:281px;height:18px;background:#e0e0e0"></div><div style="position:absolute;left:26px;top:239px;width:1102px;height:1px;background:#c4c4c4"></div><div style="position:absolute;left:27px;top:238px;width:281px;height:2px;background:#1e6c41"></div><div class="t" style="left:-132px;width:600px;text-align:center;top:210px;font-size:12.5px;color:#1e6c41;">A</div><div style="position:absolute;left:308px;top:222px;width:1px;height:17px;background:#d8d8d8"></div><div class="t" style="left:50px;width:600px;text-align:center;top:210px;font-size:12.5px;color:#444;">B</div><div style="position:absolute;left:390px;top:222px;width:1px;height:17px;background:#d8d8d8"></div><div class="t" style="left:132px;width:600px;text-align:center;top:210px;font-size:12.5px;color:#444;">C</div><div style="position:absolute;left:473px;top:222px;width:1px;height:17px;background:#d8d8d8"></div><div class="t" style="left:215px;width:600px;text-align:center;top:210px;font-size:12.5px;color:#444;">D</div><div style="position:absolute;left:556px;top:222px;width:1px;height:17px;background:#d8d8d8"></div><div class="t" style="left:298px;width:600px;text-align:center;top:210px;font-size:12.5px;color:#444;">E</div><div style="position:absolute;left:639px;top:222px;width:1px;height:17px;background:#d8d8d8"></div><div class="t" style="left:377px;width:600px;text-align:center;top:210px;font-size:12.5px;color:#444;">F</div><div style="position:absolute;left:714px;top:222px;width:1px;height:17px;background:#d8d8d8"></div><div class="t" style="left:452px;width:600px;text-align:center;top:210px;font-size:12.5px;color:#444;">G</div><div style="position:absolute;left:789px;top:222px;width:1px;height:17px;background:#d8d8d8"></div><div class="t" style="left:527px;width:600px;text-align:center;top:210px;font-size:12.5px;color:#444;">H</div><div style="position:absolute;left:864px;top:222px;width:1px;height:17px;background:#d8d8d8"></div><div class="t" style="left:602px;width:600px;text-align:center;top:210px;font-size:12.5px;color:#444;">I</div><div style="position:absolute;left:939px;top:222px;width:1px;height:17px;background:#d8d8d8"></div><div class="t" style="left:677px;width:600px;text-align:center;top:210px;font-size:12.5px;color:#444;">J</div><div style="position:absolute;left:1013px;top:222px;width:1px;height:17px;background:#d8d8d8"></div><div class="t" style="left:749px;width:600px;text-align:center;top:210px;font-size:12.5px;color:#444;">K</div><div style="position:absolute;left:1084px;top:222px;width:1px;height:17px;background:#d8d8d8"></div><div class="t" style="right:417px;top:210px;font-size:12.5px;color:#444;">L</div><div style="position:absolute;left:11px;top:224px;width:0;height:0;border-left:12px solid transparent;border-bottom:12px solid #1e6c41"></div><div style="position:absolute;left:1px;top:240px;width:25px;height:912px;background:#f0f0f0"></div><div style="position:absolute;left:1px;top:280px;width:25px;height:34px;background:#e0e0e0"></div><div style="position:absolute;left:26px;top:240px;width:1px;height:912px;background:#a6a6a6"></div><div style="position:absolute;left:1px;top:259px;width:25px;height:1px;background:#d8d8d8"></div><div class="t" style="left:-286px;width:600px;text-align:center;top:231px;font-size:12.5px;color:#444;">1</div><div style="position:absolute;left:1px;top:279px;width:25px;height:1px;background:#d8d8d8"></div><div class="t" style="left:-286px;width:600px;text-align:center;top:251px;font-size:12.5px;color:#444;">2</div><div style="position:absolute;left:1px;top:314px;width:25px;height:1px;background:#d8d8d8"></div><div class="t" style="left:-286px;width:600px;text-align:center;top:284px;font-size:12.5px;color:#1e6c41;">3</div><div style="position:absolute;left:1px;top:349px;width:25px;height:1px;background:#d8d8d8"></div><div class="t" style="left:-286px;width:600px;text-align:center;top:319px;font-size:12.5px;color:#444;">4</div><div style="position:absolute;left:1px;top:369px;width:25px;height:1px;background:#d8d8d8"></div><div class="t" style="left:-286px;width:600px;text-align:center;top:341px;font-size:12.5px;color:#444;">5</div><div style="position:absolute;left:1px;top:389px;width:25px;height:1px;background:#d8d8d8"></div><div class="t" style="left:-286px;width:600px;text-align:center;top:361px;font-size:12.5px;color:#444;">6</div><div style="position:absolute;left:1px;top:409px;width:25px;height:1px;background:#d8d8d8"></div><div class="t" style="left:-286px;width:600px;text-align:center;top:381px;font-size:12.5px;color:#444;">7</div><div style="position:absolute;left:1px;top:429px;width:25px;height:1px;background:#d8d8d8"></div><div class="t" style="left:-286px;width:600px;text-align:center;top:401px;font-size:12.5px;color:#444;">8</div><div style="position:absolute;left:1px;top:449px;width:25px;height:1px;background:#d8d8d8"></div><div class="t" style="left:-286px;width:600px;text-align:center;top:421px;font-size:12.5px;color:#444;">9</div><div style="position:absolute;left:1px;top:469px;width:25px;height:1px;background:#d8d8d8"></div><div class="t" style="left:-286px;width:600px;text-align:center;top:441px;font-size:12.5px;color:#444;">10</div><div style="position:absolute;left:1px;top:489px;width:25px;height:1px;background:#d8d8d8"></div><div class="t" style="left:-286px;width:600px;text-align:center;top:461px;font-size:12.5px;color:#444;">11</div><div style="position:absolute;left:1px;top:509px;width:25px;height:1px;background:#d8d8d8"></div><div class="t" style="left:-286px;width:600px;text-align:center;top:481px;font-size:12.5px;color:#444;">12</div><div style="position:absolute;left:1px;top:529px;width:25px;height:1px;background:#d8d8d8"></div><div class="t" style="left:-286px;width:600px;text-align:center;top:501px;font-size:12.5px;color:#444;">13</div><div style="position:absolute;left:1px;top:549px;width:25px;height:1px;background:#d8d8d8"></div><div class="t" style="left:-286px;width:600px;text-align:center;top:521px;font-size:12.5px;color:#444;">14</div><div style="position:absolute;left:1px;top:569px;width:25px;height:1px;background:#d8d8d8"></div><div class="t" style="left:-286px;width:600px;text-align:center;top:541px;font-size:12.5px;color:#444;">15</div><div style="position:absolute;left:1px;top:589px;width:25px;height:1px;background:#d8d8d8"></div><div class="t" style="left:-286px;width:600px;text-align:center;top:561px;font-size:12.5px;color:#444;">16</div><div style="position:absolute;left:1px;top:609px;width:25px;height:1px;background:#d8d8d8"></div><div class="t" style="left:-286px;width:600px;text-align:center;top:581px;font-size:12.5px;color:#444;">17</div><div style="position:absolute;left:1px;top:629px;width:25px;height:1px;background:#d8d8d8"></div><div class="t" style="left:-286px;width:600px;text-align:center;top:601px;font-size:12.5px;color:#444;">18</div><div style="position:absolute;left:1px;top:649px;width:25px;height:1px;background:#d8d8d8"></div><div class="t" style="left:-286px;width:600px;text-align:center;top:621px;font-size:12.5px;color:#444;">19</div><div style="position:absolute;left:1px;top:669px;width:25px;height:1px;background:#d8d8d8"></div><div class="t" style="left:-286px;width:600px;text-align:center;top:641px;font-size:12.5px;color:#444;">20</div><div style="position:absolute;left:1px;top:689px;width:25px;height:1px;background:#d8d8d8"></div><div class="t" style="left:-286px;width:600px;text-align:center;top:661px;font-size:12.5px;color:#444;">21</div><div style="position:absolute;left:1px;top:709px;width:25px;height:1px;background:#d8d8d8"></div><div class="t" style="left:-286px;width:600px;text-align:center;top:681px;font-size:12.5px;color:#444;">22</div><div style="position:absolute;left:1px;top:729px;width:25px;height:1px;background:#d8d8d8"></div><div class="t" style="left:-286px;width:600px;text-align:center;top:701px;font-size:12.5px;color:#444;">23</div><div style="position:absolute;left:1px;top:749px;width:25px;height:1px;background:#d8d8d8"></div><div class="t" style="left:-286px;width:600px;text-align:center;top:721px;font-size:12.5px;color:#444;">24</div><div style="position:absolute;left:1px;top:769px;width:25px;height:1px;background:#d8d8d8"></div><div class="t" style="left:-286px;width:600px;text-align:center;top:741px;font-size:12.5px;color:#444;">25</div><div style="position:absolute;left:1px;top:789px;width:25px;height:1px;background:#d8d8d8"></div><div class="t" style="left:-286px;width:600px;text-align:center;top:761px;font-size:12.5px;color:#444;">26</div><div style="position:absolute;left:1px;top:809px;width:25px;height:1px;background:#d8d8d8"></div><div class="t" style="left:-286px;width:600px;text-align:center;top:781px;font-size:12.5px;color:#444;">27</div><div style="position:absolute;left:1px;top:829px;width:25px;height:1px;background:#d8d8d8"></div><div class="t" style="left:-286px;width:600px;text-align:center;top:801px;font-size:12.5px;color:#444;">28</div><div style="position:absolute;left:1px;top:849px;width:25px;height:1px;background:#d8d8d8"></div><div class="t" style="left:-286px;width:600px;text-align:center;top:821px;font-size:12.5px;color:#444;">29</div><div style="position:absolute;left:1px;top:869px;width:25px;height:1px;background:#d8d8d8"></div><div class="t" style="left:-286px;width:600px;text-align:center;top:841px;font-size:12.5px;color:#444;">30</div><div style="position:absolute;left:1px;top:889px;width:25px;height:1px;background:#d8d8d8"></div><div class="t" style="left:-286px;width:600px;text-align:center;top:861px;font-size:12.5px;color:#444;">31</div><div style="position:absolute;left:1px;top:909px;width:25px;height:1px;background:#d8d8d8"></div><div class="t" style="left:-286px;width:600px;text-align:center;top:881px;font-size:12.5px;color:#444;">32</div><div style="position:absolute;left:1px;top:929px;width:25px;height:1px;background:#d8d8d8"></div><div class="t" style="left:-286px;width:600px;text-align:center;top:901px;font-size:12.5px;color:#444;">33</div><div style="position:absolute;left:1px;top:949px;width:25px;height:1px;background:#d8d8d8"></div><div class="t" style="left:-286px;width:600px;text-align:center;top:921px;font-size:12.5px;color:#444;">34</div><div style="position:absolute;left:1px;top:969px;width:25px;height:1px;background:#d8d8d8"></div><div class="t" style="left:-286px;width:600px;text-align:center;top:941px;font-size:12.5px;color:#444;">35</div><div style="position:absolute;left:1px;top:989px;width:25px;height:1px;background:#d8d8d8"></div><div class="t" style="left:-286px;width:600px;text-align:center;top:961px;font-size:12.5px;color:#444;">36</div><div style="position:absolute;left:1px;top:1009px;width:25px;height:1px;background:#d8d8d8"></div><div class="t" style="left:-286px;width:600px;text-align:center;top:981px;font-size:12.5px;color:#444;">37</div><div style="position:absolute;left:1px;top:1025px;width:25px;height:1px;background:#d8d8d8"></div><div class="t" style="left:-286px;width:600px;text-align:center;top:998px;font-size:12.5px;color:#444;">38</div><div style="position:absolute;left:1px;top:1041px;width:25px;height:1px;background:#d8d8d8"></div><div class="t" style="left:-286px;width:600px;text-align:center;top:1014px;font-size:12.5px;color:#444;">39</div><div style="position:absolute;left:1px;top:1057px;width:25px;height:1px;background:#d8d8d8"></div><div class="t" style="left:-286px;width:600px;text-align:center;top:1030px;font-size:12.5px;color:#444;">40</div><div style="position:absolute;left:1px;top:1073px;width:25px;height:1px;background:#d8d8d8"></div><div class="t" style="left:-286px;width:600px;text-align:center;top:1046px;font-size:12.5px;color:#444;">41</div><div style="position:absolute;left:1px;top:1089px;width:25px;height:1px;background:#d8d8d8"></div><div class="t" style="left:-286px;width:600px;text-align:center;top:1062px;font-size:12.5px;color:#444;">42</div><div style="position:absolute;left:1px;top:1105px;width:25px;height:1px;background:#d8d8d8"></div><div class="t" style="left:-286px;width:600px;text-align:center;top:1078px;font-size:12.5px;color:#444;">43</div><div style="position:absolute;left:1px;top:1121px;width:25px;height:1px;background:#d8d8d8"></div><div class="t" style="left:-286px;width:600px;text-align:center;top:1094px;font-size:12.5px;color:#444;">44</div><div style="position:absolute;left:1px;top:1137px;width:25px;height:1px;background:#d8d8d8"></div><div class="t" style="left:-286px;width:600px;text-align:center;top:1110px;font-size:12.5px;color:#444;">45</div><div style="position:absolute;left:1px;top:1153px;width:25px;height:1px;background:#d8d8d8"></div><div class="t" style="left:-286px;width:600px;text-align:center;top:1126px;font-size:12.5px;color:#444;">46</div><div style="position:absolute;left:0;top:0;width:1544px;height:1202px;overflow:hidden;clip-path:inset(220px 416px 51px 0)"><div style="position:absolute;left:27px;top:240px;width:1101px;height:912px;background:#fff"></div><div style="position:absolute;left:27px;top:259px;width:1101px;height:1px;background:#e1e1e1"></div><div style="position:absolute;left:27px;top:279px;width:1101px;height:1px;background:#e1e1e1"></div><div style="position:absolute;left:27px;top:314px;width:1101px;height:1px;background:#e1e1e1"></div><div style="position:absolute;left:27px;top:349px;width:1101px;height:1px;background:#e1e1e1"></div><div style="position:absolute;left:27px;top:369px;width:1101px;height:1px;background:#e1e1e1"></div><div style="position:absolute;left:27px;top:389px;width:1101px;height:1px;background:#e1e1e1"></div><div style="position:absolute;left:27px;top:409px;width:1101px;height:1px;background:#e1e1e1"></div><div style="position:absolute;left:27px;top:429px;width:1101px;height:1px;background:#e1e1e1"></div><div style="position:absolute;left:27px;top:449px;width:1101px;height:1px;background:#e1e1e1"></div><div style="position:absolute;left:27px;top:469px;width:1101px;height:1px;background:#e1e1e1"></div><div style="position:absolute;left:27px;top:489px;width:1101px;height:1px;background:#e1e1e1"></div><div style="position:absolute;left:27px;top:509px;width:1101px;height:1px;background:#e1e1e1"></div><div style="position:absolute;left:27px;top:529px;width:1101px;height:1px;background:#e1e1e1"></div><div style="position:absolute;left:27px;top:549px;width:1101px;height:1px;background:#e1e1e1"></div><div style="position:absolute;left:27px;top:569px;width:1101px;height:1px;background:#e1e1e1"></div><div style="position:absolute;left:27px;top:589px;width:1101px;height:1px;background:#e1e1e1"></div><div style="position:absolute;left:27px;top:609px;width:1101px;height:1px;background:#e1e1e1"></div><div style="position:absolute;left:27px;top:629px;width:1101px;height:1px;background:#e1e1e1"></div><div style="position:absolute;left:27px;top:649px;width:1101px;height:1px;background:#e1e1e1"></div><div style="position:absolute;left:27px;top:669px;width:1101px;height:1px;background:#e1e1e1"></div><div style="position:absolute;left:27px;top:689px;width:1101px;height:1px;background:#e1e1e1"></div><div style="position:absolute;left:27px;top:709px;width:1101px;height:1px;background:#e1e1e1"></div><div style="position:absolute;left:27px;top:729px;width:1101px;height:1px;background:#e1e1e1"></div><div style="position:absolute;left:27px;top:749px;width:1101px;height:1px;background:#e1e1e1"></div><div style="position:absolute;left:27px;top:769px;width:1101px;height:1px;background:#e1e1e1"></div><div style="position:absolute;left:27px;top:789px;width:1101px;height:1px;background:#e1e1e1"></div><div style="position:absolute;left:27px;top:809px;width:1101px;height:1px;background:#e1e1e1"></div><div style="position:absolute;left:27px;top:829px;width:1101px;height:1px;background:#e1e1e1"></div><div style="position:absolute;left:27px;top:849px;width:1101px;height:1px;background:#e1e1e1"></div><div style="position:absolute;left:27px;top:869px;width:1101px;height:1px;background:#e1e1e1"></div><div style="position:absolute;left:27px;top:889px;width:1101px;height:1px;background:#e1e1e1"></div><div style="position:absolute;left:27px;top:909px;width:1101px;height:1px;background:#e1e1e1"></div><div style="position:absolute;left:27px;top:929px;width:1101px;height:1px;background:#e1e1e1"></div><div style="position:absolute;left:27px;top:949px;width:1101px;height:1px;background:#e1e1e1"></div><div style="position:absolute;left:27px;top:969px;width:1101px;height:1px;background:#e1e1e1"></div><div style="position:absolute;left:27px;top:989px;width:1101px;height:1px;background:#e1e1e1"></div><div style="position:absolute;left:27px;top:1009px;width:1101px;height:1px;background:#e1e1e1"></div><div style="position:absolute;left:27px;top:1025px;width:1101px;height:1px;background:#e1e1e1"></div><div style="position:absolute;left:27px;top:1041px;width:1101px;height:1px;background:#e1e1e1"></div><div style="position:absolute;left:27px;top:1057px;width:1101px;height:1px;background:#e1e1e1"></div><div style="position:absolute;left:27px;top:1073px;width:1101px;height:1px;background:#e1e1e1"></div><div style="position:absolute;left:27px;top:1089px;width:1101px;height:1px;background:#e1e1e1"></div><div style="position:absolute;left:27px;top:1105px;width:1101px;height:1px;background:#e1e1e1"></div><div style="position:absolute;left:27px;top:1121px;width:1101px;height:1px;background:#e1e1e1"></div><div style="position:absolute;left:27px;top:1137px;width:1101px;height:1px;background:#e1e1e1"></div><div style="position:absolute;left:27px;top:1153px;width:1101px;height:1px;background:#e1e1e1"></div><div style="position:absolute;left:308px;top:240px;width:1px;height:912px;background:#e1e1e1"></div><div style="position:absolute;left:390px;top:240px;width:1px;height:912px;background:#e1e1e1"></div><div style="position:absolute;left:473px;top:240px;width:1px;height:912px;background:#e1e1e1"></div><div style="position:absolute;left:556px;top:240px;width:1px;height:912px;background:#e1e1e1"></div><div style="position:absolute;left:639px;top:240px;width:1px;height:912px;background:#e1e1e1"></div><div style="position:absolute;left:714px;top:240px;width:1px;height:912px;background:#e1e1e1"></div><div style="position:absolute;left:789px;top:240px;width:1px;height:912px;background:#e1e1e1"></div><div style="position:absolute;left:864px;top:240px;width:1px;height:912px;background:#e1e1e1"></div><div style="position:absolute;left:939px;top:240px;width:1px;height:912px;background:#e1e1e1"></div><div style="position:absolute;left:1013px;top:240px;width:1px;height:912px;background:#e1e1e1"></div><div style="position:absolute;left:1084px;top:240px;width:1px;height:912px;background:#e1e1e1"></div><div style="position:absolute;left:27px;top:240px;width:363px;height:19px;background:#d9e1f2"></div><div style="position:absolute;left:27px;top:259px;width:363px;height:1px;background:#8ea9db"></div><div style="position:absolute;left:27px;top:280px;width:1058px;height:89px;background:#d9e1f2"></div><div style="position:absolute;left:864px;top:315px;width:76px;height:54px;background:#d9d9d9"></div><div style="position:absolute;left:27px;top:369px;width:1058px;height:1px;background:#8ea9db"></div><div style="position:absolute;left:27px;top:370px;width:1058px;height:20px;background:#d9d9d9"></div><div style="position:absolute;left:27px;top:390px;width:1058px;height:20px;background:#fff"></div><div style="position:absolute;left:864px;top:390px;width:76px;height:20px;background:#d9d9d9"></div><div style="position:absolute;left:27px;top:410px;width:1058px;height:20px;background:#d9d9d9"></div><div style="position:absolute;left:27px;top:430px;width:1058px;height:20px;background:#fff"></div><div style="position:absolute;left:864px;top:430px;width:76px;height:20px;background:#d9d9d9"></div><div style="position:absolute;left:27px;top:450px;width:1058px;height:20px;background:#d9d9d9"></div><div style="position:absolute;left:27px;top:470px;width:1058px;height:20px;background:#fff"></div><div style="position:absolute;left:864px;top:470px;width:76px;height:20px;background:#d9d9d9"></div><div style="position:absolute;left:27px;top:490px;width:1058px;height:20px;background:#d9d9d9"></div><div style="position:absolute;left:27px;top:510px;width:1058px;height:20px;background:#fff"></div><div style="position:absolute;left:864px;top:510px;width:76px;height:20px;background:#d9d9d9"></div><div style="position:absolute;left:27px;top:530px;width:1058px;height:20px;background:#d9d9d9"></div><div style="position:absolute;left:27px;top:550px;width:1058px;height:20px;background:#fff"></div><div style="position:absolute;left:864px;top:550px;width:76px;height:20px;background:#d9d9d9"></div><div style="position:absolute;left:27px;top:570px;width:1058px;height:20px;background:#d9d9d9"></div><div style="position:absolute;left:27px;top:590px;width:1058px;height:20px;background:#fff"></div><div style="position:absolute;left:864px;top:590px;width:76px;height:20px;background:#d9d9d9"></div><div style="position:absolute;left:27px;top:610px;width:1058px;height:20px;background:#d9d9d9"></div><div style="position:absolute;left:27px;top:630px;width:1058px;height:20px;background:#fff"></div><div style="position:absolute;left:864px;top:630px;width:76px;height:20px;background:#d9d9d9"></div><div style="position:absolute;left:27px;top:650px;width:1058px;height:20px;background:#d9d9d9"></div><div style="position:absolute;left:27px;top:670px;width:1058px;height:20px;background:#fff"></div><div style="position:absolute;left:864px;top:670px;width:76px;height:20px;background:#d9d9d9"></div><div style="position:absolute;left:27px;top:690px;width:1058px;height:20px;background:#d9d9d9"></div><div style="position:absolute;left:27px;top:710px;width:1058px;height:20px;background:#fff"></div><div style="position:absolute;left:864px;top:710px;width:76px;height:20px;background:#d9d9d9"></div><div style="position:absolute;left:27px;top:730px;width:1058px;height:20px;background:#d9d9d9"></div><div style="position:absolute;left:27px;top:750px;width:1058px;height:20px;background:#fff"></div><div style="position:absolute;left:864px;top:750px;width:76px;height:20px;background:#d9d9d9"></div><div style="position:absolute;left:27px;top:770px;width:1058px;height:20px;background:#d9d9d9"></div><div style="position:absolute;left:27px;top:790px;width:1058px;height:20px;background:#fff"></div><div style="position:absolute;left:864px;top:790px;width:76px;height:20px;background:#d9d9d9"></div><div style="position:absolute;left:27px;top:810px;width:1058px;height:20px;background:#d9d9d9"></div><div style="position:absolute;left:27px;top:830px;width:1058px;height:20px;background:#fff"></div><div style="position:absolute;left:864px;top:830px;width:76px;height:20px;background:#d9d9d9"></div><div style="position:absolute;left:27px;top:850px;width:1058px;height:20px;background:#d9d9d9"></div><div style="position:absolute;left:27px;top:870px;width:1058px;height:20px;background:#fff"></div><div style="position:absolute;left:864px;top:870px;width:76px;height:20px;background:#d9d9d9"></div><div style="position:absolute;left:27px;top:890px;width:1058px;height:20px;background:#d9d9d9"></div><div style="position:absolute;left:27px;top:910px;width:1058px;height:20px;background:#fff"></div><div style="position:absolute;left:864px;top:910px;width:76px;height:20px;background:#d9d9d9"></div><div style="position:absolute;left:27px;top:930px;width:1058px;height:20px;background:#d9d9d9"></div><div style="position:absolute;left:27px;top:950px;width:1058px;height:20px;background:#fff"></div><div style="position:absolute;left:864px;top:950px;width:76px;height:20px;background:#d9d9d9"></div><div style="position:absolute;left:27px;top:970px;width:1058px;height:20px;background:#d9d9d9"></div><div style="position:absolute;left:27px;top:990px;width:1058px;height:20px;background:#fff"></div><div style="position:absolute;left:864px;top:990px;width:76px;height:20px;background:#d9d9d9"></div><div style="position:absolute;left:27px;top:1009px;width:1058px;height:17px;background:#d9d9d9"></div><div style="position:absolute;left:27px;top:1026px;width:1058px;height:16px;background:#fff"></div><div style="position:absolute;left:864px;top:1026px;width:76px;height:16px;background:#d9d9d9"></div><div style="position:absolute;left:27px;top:1042px;width:1058px;height:16px;background:#d9d9d9"></div><div style="position:absolute;left:27px;top:1058px;width:1058px;height:16px;background:#fff"></div><div style="position:absolute;left:864px;top:1058px;width:76px;height:16px;background:#d9d9d9"></div><div style="position:absolute;left:27px;top:1074px;width:1058px;height:16px;background:#d9d9d9"></div><div style="position:absolute;left:27px;top:1090px;width:1058px;height:16px;background:#fff"></div><div style="position:absolute;left:864px;top:1090px;width:76px;height:16px;background:#d9d9d9"></div><div style="position:absolute;left:27px;top:1106px;width:1058px;height:16px;background:#d9d9d9"></div><div style="position:absolute;left:27px;top:1122px;width:1058px;height:16px;background:#fff"></div><div style="position:absolute;left:864px;top:1122px;width:76px;height:16px;background:#d9d9d9"></div><div style="position:absolute;left:27px;top:1138px;width:1058px;height:16px;background:#d9d9d9"></div><div style="position:absolute;left:27px;top:389px;width:1058px;height:1px;background:#8ea9db"></div><div style="position:absolute;left:27px;top:889px;width:1058px;height:1px;background:#8ea9db"></div><div style="position:absolute;left:27px;top:849px;width:1058px;height:1px;background:#4472c4"></div><div style="position:absolute;left:27px;top:869px;width:1058px;height:1px;background:#4472c4"></div><div class="t" style="left:29px;top:231px;font-size:11px;color:#000;transform:scaleX(1.0631);transform-origin:left;">Company Name</div><div class="t" style="left:310px;top:231px;font-size:11px;color:#000;transform:scaleX(1.2669);transform-origin:left;">All</div><div style="position:absolute;left:374px;top:241px;width:15px;height:16px;border:1px solid #c6c6c6;background:#f7f7f7"></div><div style="position:absolute;left:378px;top:248px;width:0;height:0;border-left:4px solid transparent;border-right:4px solid transparent;border-top:5px solid #595959"></div><div class="t" style="left:31px;top:279px;font-size:23.3px;font-weight:bold;color:#000;transform:scaleX(1.0033);transform-origin:left;">Balance Sheet - Quarter</div><div class="t" style="left:310px;top:283px;font-size:11px;font-weight:bold;color:#000;transform:scaleX(0.9250);transform-origin:left;">Fiscal Year</div><div style="position:absolute;left:373px;top:296px;width:16px;height:15px;border:1px solid #c6c6c6;background:#f7f7f7"></div><div style="position:absolute;left:378px;top:302px;width:0;height:0;border-left:4px solid transparent;border-right:4px solid transparent;border-top:5px solid #595959"></div><div style="position:absolute;left:312px;top:333px;width:7px;height:7px;border:1px solid #a9b6cb;background:#f4f6fa;border-radius:1px"></div><div style="position:absolute;left:314px;top:337px;width:5px;height:1px;background:#1f2d4d"></div><div style="position:absolute;left:316px;top:335px;width:1px;height:5px;background:#1f2d4d"></div><div class="t" style="left:323px;top:318px;font-size:11px;font-weight:bold;color:#000;transform:scaleX(0.9543);transform-origin:left;">FY 2017</div><div style="position:absolute;left:394px;top:333px;width:7px;height:7px;border:1px solid #a9b6cb;background:#f4f6fa;border-radius:1px"></div><div style="position:absolute;left:396px;top:337px;width:5px;height:1px;background:#1f2d4d"></div><div style="position:absolute;left:398px;top:335px;width:1px;height:5px;background:#1f2d4d"></div><div class="t" style="left:405px;top:318px;font-size:11px;font-weight:bold;color:#000;transform:scaleX(0.9543);transform-origin:left;">FY 2018</div><div style="position:absolute;left:477px;top:333px;width:7px;height:7px;border:1px solid #a9b6cb;background:#f4f6fa;border-radius:1px"></div><div style="position:absolute;left:479px;top:337px;width:5px;height:1px;background:#1f2d4d"></div><div style="position:absolute;left:481px;top:335px;width:1px;height:5px;background:#1f2d4d"></div><div class="t" style="left:488px;top:318px;font-size:11px;font-weight:bold;color:#000;transform:scaleX(0.9543);transform-origin:left;">FY 2019</div><div style="position:absolute;left:560px;top:333px;width:7px;height:7px;border:1px solid #a9b6cb;background:#f4f6fa;border-radius:1px"></div><div style="position:absolute;left:562px;top:337px;width:5px;height:1px;background:#1f2d4d"></div><div class="t" style="left:571px;top:318px;font-size:11px;font-weight:bold;color:#000;transform:scaleX(0.9543);transform-origin:left;">FY 2020</div><div class="t" style="left:867px;top:318px;font-size:11px;font-weight:bold;color:#000;transform:scaleX(0.9656);transform-origin:left;">FY 2020 Total</div><div style="position:absolute;left:943px;top:333px;width:7px;height:7px;border:1px solid #a9b6cb;background:#f4f6fa;border-radius:1px"></div><div style="position:absolute;left:945px;top:337px;width:5px;height:1px;background:#1f2d4d"></div><div style="position:absolute;left:947px;top:335px;width:1px;height:5px;background:#1f2d4d"></div><div class="t" style="left:954px;top:318px;font-size:11px;font-weight:bold;color:#000;transform:scaleX(0.9543);transform-origin:left;">FY 2021</div><div style="position:absolute;left:1017px;top:333px;width:7px;height:7px;border:1px solid #a9b6cb;background:#f4f6fa;border-radius:1px"></div><div style="position:absolute;left:1019px;top:337px;width:5px;height:1px;background:#1f2d4d"></div><div style="position:absolute;left:1021px;top:335px;width:1px;height:5px;background:#1f2d4d"></div><div class="t" style="left:1028px;top:318px;font-size:11px;font-weight:bold;color:#000;transform:scaleX(0.9543);transform-origin:left;">FY 2022</div><div class="t" style="left:559px;top:341px;font-size:11px;font-weight:bold;color:#000;transform:scaleX(0.9792);transform-origin:left;">FQ1-2020</div><div class="t" style="left:642px;top:341px;font-size:11px;font-weight:bold;color:#000;transform:scaleX(0.9792);transform-origin:left;">FQ2-2020</div><div class="t" style="left:717px;top:341px;font-size:11px;font-weight:bold;color:#000;transform:scaleX(0.9792);transform-origin:left;">FQ3-2020</div><div class="t" style="left:792px;top:341px;font-size:11px;font-weight:bold;color:#000;transform:scaleX(0.9792);transform-origin:left;">FQ4-2020</div><div style="position:absolute;left:289px;top:351px;width:16px;height:16px;border:1px solid #c6c6c6;background:#f7f7f7"></div><div style="position:absolute;left:294px;top:358px;width:0;height:0;border-left:4px solid transparent;border-right:4px solid transparent;border-top:5px solid #595959"></div><div style="position:absolute;left:31px;top:376px;width:7px;height:7px;border:1px solid #a9b6cb;background:#f4f6fa;border-radius:1px"></div><div style="position:absolute;left:33px;top:380px;width:5px;height:1px;background:#1f2d4d"></div><div class="t" style="left:42px;top:361px;font-size:11px;font-weight:bold;color:#000;transform:scaleX(0.8520);transform-origin:left;">ASSETS</div><div style="position:absolute;left:44px;top:396px;width:7px;height:7px;border:1px solid #a9b6cb;background:#f4f6fa;border-radius:1px"></div><div style="position:absolute;left:46px;top:400px;width:5px;height:1px;background:#1f2d4d"></div><div class="t" style="left:55px;top:381px;font-size:11px;font-weight:bold;color:#000;transform:scaleX(0.9101);transform-origin:left;">Current Assets</div><div style="position:absolute;left:57px;top:416px;width:7px;height:7px;border:1px solid #a9b6cb;background:#f4f6fa;border-radius:1px"></div><div style="position:absolute;left:59px;top:420px;width:5px;height:1px;background:#1f2d4d"></div><div class="t" style="left:68px;top:401px;font-size:11px;color:#000;transform:scaleX(1.0731);transform-origin:left;">Checking/Savings</div><div style="position:absolute;left:70px;top:436px;width:7px;height:7px;border:1px solid #a9b6cb;background:#f4f6fa;border-radius:1px"></div><div style="position:absolute;left:72px;top:440px;width:5px;height:1px;background:#1f2d4d"></div><div class="t" style="left:81px;top:421px;font-size:11px;font-weight:bold;color:#000;transform:scaleX(0.9491);transform-origin:left;">10000 · Banking</div><div class="t" style="left:94px;top:441px;font-size:11px;color:#000;transform:scaleX(1.0613);transform-origin:left;">10001 · Operating Account</div><div class="t" style="right:1156px;top:441px;font-size:11px;color:#000;transform:scaleX(0.9800);transform-origin:right;">$97,384.41</div><div class="t" style="right:1073px;top:441px;font-size:11px;color:#000;transform:scaleX(0.9800);transform-origin:right;">$71,942.24</div><div class="t" style="right:990px;top:441px;font-size:11px;color:#000;transform:scaleX(0.9800);transform-origin:right;">$67,955.03</div><div class="t" style="right:907px;top:441px;font-size:11px;color:#000;transform:scaleX(0.9800);transform-origin:right;">$63,997.83</div><div class="t" style="right:832px;top:441px;font-size:11px;color:#000;transform:scaleX(0.9800);transform-origin:right;">$57,540.33</div><div class="t" style="right:757px;top:441px;font-size:11px;color:#000;transform:scaleX(0.9800);transform-origin:right;">$50,330.13</div><div class="t" style="right:682px;top:441px;font-size:11px;color:#000;transform:scaleX(0.9800);transform-origin:right;">$40,954.26</div><div class="t" style="right:607px;top:441px;font-size:11px;color:#000;transform:scaleX(0.9800);transform-origin:right;">$40,954.26</div><div class="t" style="right:533px;top:441px;font-size:11px;color:#000;transform:scaleX(0.9800);transform-origin:right;">$63,635.76</div><div class="t" style="right:462px;top:441px;font-size:11px;color:#000;transform:scaleX(0.9800);transform-origin:right;">$32,808.52</div><div class="t" style="left:94px;top:461px;font-size:11px;color:#000;transform:scaleX(1.0500);transform-origin:left;">10005 · Payroll Account</div><div class="t" style="right:1156px;top:461px;font-size:11px;color:#000;transform:scaleX(0.9800);transform-origin:right;">$35,189.09</div><div class="t" style="right:1073px;top:461px;font-size:11px;color:#000;transform:scaleX(0.9800);transform-origin:right;">$22,614.16</div><div class="t" style="right:990px;top:461px;font-size:11px;color:#000;transform:scaleX(0.9800);transform-origin:right;">$69,448.79</div><div class="t" style="right:907px;top:461px;font-size:11px;color:#000;transform:scaleX(0.9800);transform-origin:right;">$64,871.16</div><div class="t" style="right:832px;top:461px;font-size:11px;color:#000;transform:scaleX(0.9800);transform-origin:right;">$63,311.01</div><div class="t" style="right:757px;top:461px;font-size:11px;color:#000;transform:scaleX(0.9800);transform-origin:right;">$53,771.55</div><div class="t" style="right:682px;top:461px;font-size:11px;color:#000;transform:scaleX(0.9800);transform-origin:right;">$48,974.56</div><div class="t" style="right:607px;top:461px;font-size:11px;color:#000;transform:scaleX(0.9800);transform-origin:right;">$48,974.56</div><div class="t" style="right:533px;top:461px;font-size:11px;color:#000;transform:scaleX(0.9800);transform-origin:right;">$50,749.21</div><div class="t" style="right:462px;top:461px;font-size:11px;color:#000;transform:scaleX(0.9800);transform-origin:right;">$56,546.83</div><div class="t" style="left:94px;top:481px;font-size:11px;color:#000;transform:scaleX(1.0014);transform-origin:left;">10010 · Petty Cash</div><div class="t" style="right:1073px;top:481px;font-size:11px;color:#000;transform:scaleX(0.9800);transform-origin:right;">$1,415.28</div><div class="t" style="right:990px;top:481px;font-size:11px;color:#000;transform:scaleX(0.9800);transform-origin:right;">$3,041.84</div><div class="t" style="right:907px;top:481px;font-size:11px;color:#000;transform:scaleX(0.9800);transform-origin:right;">$2,609.60</div><div class="t" style="right:832px;top:481px;font-size:11px;color:#000;transform:scaleX(0.9800);transform-origin:right;">$2,840.36</div><div class="t" style="right:757px;top:481px;font-size:11px;color:#000;transform:scaleX(0.9800);transform-origin:right;">$2,953.53</div><div class="t" style="right:682px;top:481px;font-size:11px;color:#000;transform:scaleX(0.9800);transform-origin:right;">$5,238.96</div><div class="t" style="right:607px;top:481px;font-size:11px;color:#000;transform:scaleX(0.9800);transform-origin:right;">$5,238.96</div><div class="t" style="right:533px;top:481px;font-size:11px;color:#000;transform:scaleX(0.9800);transform-origin:right;">$2,855.00</div><div class="t" style="right:462px;top:481px;font-size:11px;color:#000;transform:scaleX(0.9800);transform-origin:right;">$12,219.48</div><div class="t" style="left:56px;top:501px;font-size:11px;font-weight:bold;color:#000;transform:scaleX(0.9574);transform-origin:left;">10000 · Banking Total</div><div class="t" style="right:1156px;top:501px;font-size:11px;font-weight:bold;color:#000;transform:scaleX(0.9750);transform-origin:right;">$132,573.50</div><div class="t" style="right:1073px;top:501px;font-size:11px;font-weight:bold;color:#000;transform:scaleX(0.9750);transform-origin:right;">$95,971.68</div><div class="t" style="right:990px;top:501px;font-size:11px;font-weight:bold;color:#000;transform:scaleX(0.9750);transform-origin:right;">$140,445.66</div><div class="t" style="right:907px;top:501px;font-size:11px;font-weight:bold;color:#000;transform:scaleX(0.9750);transform-origin:right;">$131,478.59</div><div class="t" style="right:832px;top:501px;font-size:11px;font-weight:bold;color:#000;transform:scaleX(0.9750);transform-origin:right;">$123,691.70</div><div class="t" style="right:757px;top:501px;font-size:11px;font-weight:bold;color:#000;transform:scaleX(0.9750);transform-origin:right;">$107,055.21</div><div class="t" style="right:682px;top:501px;font-size:11px;font-weight:bold;color:#000;transform:scaleX(0.9750);transform-origin:right;">$95,167.78</div><div class="t" style="right:607px;top:501px;font-size:11px;font-weight:bold;color:#000;transform:scaleX(0.9750);transform-origin:right;">$95,167.78</div><div class="t" style="right:533px;top:501px;font-size:11px;font-weight:bold;color:#000;transform:scaleX(0.9750);transform-origin:right;">$117,239.97</div><div class="t" style="right:462px;top:501px;font-size:11px;font-weight:bold;color:#000;transform:scaleX(0.9750);transform-origin:right;">$101,574.83</div><div class="t" style="left:47px;top:521px;font-size:11px;color:#000;transform:scaleX(1.1002);transform-origin:left;">Checking/Savings Total</div><div class="t" style="right:1156px;top:521px;font-size:11px;color:#000;transform:scaleX(0.9800);transform-origin:right;">$132,573.50</div><div class="t" style="right:1073px;top:521px;font-size:11px;color:#000;transform:scaleX(0.9800);transform-origin:right;">$95,971.68</div><div class="t" style="right:990px;top:521px;font-size:11px;color:#000;transform:scaleX(0.9800);transform-origin:right;">$140,445.66</div><div class="t" style="right:907px;top:521px;font-size:11px;color:#000;transform:scaleX(0.9800);transform-origin:right;">$131,478.59</div><div class="t" style="right:832px;top:521px;font-size:11px;color:#000;transform:scaleX(0.9800);transform-origin:right;">$123,691.70</div><div class="t" style="right:757px;top:521px;font-size:11px;color:#000;transform:scaleX(0.9800);transform-origin:right;">$107,055.21</div><div class="t" style="right:682px;top:521px;font-size:11px;color:#000;transform:scaleX(0.9800);transform-origin:right;">$95,167.78</div><div class="t" style="right:607px;top:521px;font-size:11px;color:#000;transform:scaleX(0.9800);transform-origin:right;">$95,167.78</div><div class="t" style="right:533px;top:521px;font-size:11px;color:#000;transform:scaleX(0.9800);transform-origin:right;">$117,239.97</div><div class="t" style="right:462px;top:521px;font-size:11px;color:#000;transform:scaleX(0.9800);transform-origin:right;">$101,574.83</div><div style="position:absolute;left:57px;top:556px;width:7px;height:7px;border:1px solid #a9b6cb;background:#f4f6fa;border-radius:1px"></div><div style="position:absolute;left:59px;top:560px;width:5px;height:1px;background:#1f2d4d"></div><div class="t" style="left:68px;top:541px;font-size:11px;color:#000;transform:scaleX(1.0892);transform-origin:left;">Accounts Receivable</div><div class="t" style="left:81px;top:561px;font-size:11px;font-weight:bold;color:#000;transform:scaleX(0.9372);transform-origin:left;">11000 · Accounts Receivable</div><div class="t" style="right:1156px;top:561px;font-size:11px;font-weight:bold;color:#000;transform:scaleX(0.9750);transform-origin:right;">$7,924.68</div><div class="t" style="right:1073px;top:561px;font-size:11px;font-weight:bold;color:#000;transform:scaleX(0.9750);transform-origin:right;">$67,090.12</div><div class="t" style="right:990px;top:561px;font-size:11px;font-weight:bold;color:#000;transform:scaleX(0.9750);transform-origin:right;">$74,893.50</div><div class="t" style="right:907px;top:561px;font-size:11px;font-weight:bold;color:#000;transform:scaleX(0.9750);transform-origin:right;">$77,131.31</div><div class="t" style="right:832px;top:561px;font-size:11px;font-weight:bold;color:#000;transform:scaleX(0.9750);transform-origin:right;">$80,709.06</div><div class="t" style="right:757px;top:561px;font-size:11px;font-weight:bold;color:#000;transform:scaleX(0.9750);transform-origin:right;">$86,763.26</div><div class="t" style="right:682px;top:561px;font-size:11px;font-weight:bold;color:#000;transform:scaleX(0.9750);transform-origin:right;">$86,763.26</div><div class="t" style="right:607px;top:561px;font-size:11px;font-weight:bold;color:#000;transform:scaleX(0.9750);transform-origin:right;">$86,763.26</div><div class="t" style="right:533px;top:561px;font-size:11px;font-weight:bold;color:#000;transform:scaleX(0.9750);transform-origin:right;">$109,885.74</div><div class="t" style="right:462px;top:561px;font-size:11px;font-weight:bold;color:#000;transform:scaleX(0.9750);transform-origin:right;">$141,744.56</div><div class="t" style="left:47px;top:581px;font-size:11px;color:#000;transform:scaleX(1.1053);transform-origin:left;">Accounts Receivable Total</div><div class="t" style="right:1156px;top:581px;font-size:11px;color:#000;transform:scaleX(0.9800);transform-origin:right;">$7,924.68</div><div class="t" style="right:1073px;top:581px;font-size:11px;color:#000;transform:scaleX(0.9800);transform-origin:right;">$67,090.12</div><div class="t" style="right:990px;top:581px;font-size:11px;color:#000;transform:scaleX(0.9800);transform-origin:right;">$74,893.50</div><div class="t" style="right:907px;top:581px;font-size:11px;color:#000;transform:scaleX(0.9800);transform-origin:right;">$77,131.31</div><div class="t" style="right:832px;top:581px;font-size:11px;color:#000;transform:scaleX(0.9800);transform-origin:right;">$80,709.06</div><div class="t" style="right:757px;top:581px;font-size:11px;color:#000;transform:scaleX(0.9800);transform-origin:right;">$86,763.26</div><div class="t" style="right:682px;top:581px;font-size:11px;color:#000;transform:scaleX(0.9800);transform-origin:right;">$86,763.26</div><div class="t" style="right:607px;top:581px;font-size:11px;color:#000;transform:scaleX(0.9800);transform-origin:right;">$86,763.26</div><div class="t" style="right:533px;top:581px;font-size:11px;color:#000;transform:scaleX(0.9800);transform-origin:right;">$109,885.74</div><div class="t" style="right:462px;top:581px;font-size:11px;color:#000;transform:scaleX(0.9800);transform-origin:right;">$141,744.56</div><div style="position:absolute;left:57px;top:616px;width:7px;height:7px;border:1px solid #a9b6cb;background:#f4f6fa;border-radius:1px"></div><div style="position:absolute;left:59px;top:620px;width:5px;height:1px;background:#1f2d4d"></div><div class="t" style="left:68px;top:601px;font-size:11px;color:#000;transform:scaleX(1.0894);transform-origin:left;">Other Current Assets</div><div class="t" style="left:81px;top:621px;font-size:11px;font-weight:bold;color:#000;transform:scaleX(0.9341);transform-origin:left;">12000 · Undeposited Funds</div><div class="t" style="right:990px;top:621px;font-size:11px;font-weight:bold;color:#000;transform:scaleX(0.9750);transform-origin:right;">$227.28</div><div class="t" style="right:907px;top:621px;font-size:11px;font-weight:bold;color:#000;transform:scaleX(0.9750);transform-origin:right;">$2,190.80</div><div class="t" style="right:832px;top:621px;font-size:11px;font-weight:bold;color:#000;transform:scaleX(0.9750);transform-origin:right;">$3,076.30</div><div class="t" style="right:757px;top:621px;font-size:11px;font-weight:bold;color:#000;transform:scaleX(0.9750);transform-origin:right;">$3,076.30</div><div class="t" style="right:682px;top:621px;font-size:11px;font-weight:bold;color:#000;transform:scaleX(0.9750);transform-origin:right;">$3,076.30</div><div class="t" style="right:607px;top:621px;font-size:11px;font-weight:bold;color:#000;transform:scaleX(0.9750);transform-origin:right;">$3,076.30</div><div class="t" style="right:533px;top:621px;font-size:11px;font-weight:bold;color:#000;transform:scaleX(0.9750);transform-origin:right;">$2,752.92</div><div class="t" style="right:462px;top:621px;font-size:11px;font-weight:bold;color:#000;transform:scaleX(0.9750);transform-origin:right;">$5,098.59</div><div class="t" style="left:81px;top:641px;font-size:11px;font-weight:bold;color:#000;transform:scaleX(0.9536);transform-origin:left;">12500 · Inventory Asset</div><div class="t" style="right:1156px;top:641px;font-size:11px;font-weight:bold;color:#000;transform:scaleX(0.9750);transform-origin:right;">$133,834.19</div><div class="t" style="right:1073px;top:641px;font-size:11px;font-weight:bold;color:#000;transform:scaleX(0.9750);transform-origin:right;">$133,500.29</div><div class="t" style="right:990px;top:641px;font-size:11px;font-weight:bold;color:#000;transform:scaleX(0.9750);transform-origin:right;">$109,812.90</div><div class="t" style="right:907px;top:641px;font-size:11px;font-weight:bold;color:#000;transform:scaleX(0.9750);transform-origin:right;">$119,575.91</div><div class="t" style="right:832px;top:641px;font-size:11px;font-weight:bold;color:#000;transform:scaleX(0.9750);transform-origin:right;">$123,946.55</div><div class="t" style="right:757px;top:641px;font-size:11px;font-weight:bold;color:#000;transform:scaleX(0.9750);transform-origin:right;">$125,641.32</div><div class="t" style="right:682px;top:641px;font-size:11px;font-weight:bold;color:#000;transform:scaleX(0.9750);transform-origin:right;">$142,115.55</div><div class="t" style="right:607px;top:641px;font-size:11px;font-weight:bold;color:#000;transform:scaleX(0.9750);transform-origin:right;">$142,115.55</div><div class="t" style="right:533px;top:641px;font-size:11px;font-weight:bold;color:#000;transform:scaleX(0.9750);transform-origin:right;">$166,064.40</div><div class="t" style="right:462px;top:641px;font-size:11px;font-weight:bold;color:#000;transform:scaleX(0.9750);transform-origin:right;">$175,407.02</div><div class="t" style="left:47px;top:661px;font-size:11px;color:#000;transform:scaleX(1.1055);transform-origin:left;">Other Current Assets Total</div><div class="t" style="right:1156px;top:661px;font-size:11px;color:#000;transform:scaleX(0.9800);transform-origin:right;">$133,834.19</div><div class="t" style="right:1073px;top:661px;font-size:11px;color:#000;transform:scaleX(0.9800);transform-origin:right;">$133,500.29</div><div class="t" style="right:990px;top:661px;font-size:11px;color:#000;transform:scaleX(0.9800);transform-origin:right;">$110,040.18</div><div class="t" style="right:907px;top:661px;font-size:11px;color:#000;transform:scaleX(0.9800);transform-origin:right;">$121,766.71</div><div class="t" style="right:832px;top:661px;font-size:11px;color:#000;transform:scaleX(0.9800);transform-origin:right;">$127,022.85</div><div class="t" style="right:757px;top:661px;font-size:11px;color:#000;transform:scaleX(0.9800);transform-origin:right;">$128,717.62</div><div class="t" style="right:682px;top:661px;font-size:11px;color:#000;transform:scaleX(0.9800);transform-origin:right;">$145,191.85</div><div class="t" style="right:607px;top:661px;font-size:11px;color:#000;transform:scaleX(0.9800);transform-origin:right;">$145,191.85</div><div class="t" style="right:533px;top:661px;font-size:11px;color:#000;transform:scaleX(0.9800);transform-origin:right;">$168,817.32</div><div class="t" style="right:462px;top:661px;font-size:11px;color:#000;transform:scaleX(0.9800);transform-origin:right;">$180,505.61</div><div class="t" style="left:38px;top:681px;font-size:11px;font-weight:bold;color:#000;transform:scaleX(0.9320);transform-origin:left;">Current Assets Total</div><div class="t" style="right:1156px;top:681px;font-size:11px;font-weight:bold;color:#000;transform:scaleX(0.9750);transform-origin:right;">$274,332.37</div><div class="t" style="right:1073px;top:681px;font-size:11px;font-weight:bold;color:#000;transform:scaleX(0.9750);transform-origin:right;">$296,562.09</div><div class="t" style="right:990px;top:681px;font-size:11px;font-weight:bold;color:#000;transform:scaleX(0.9750);transform-origin:right;">$325,379.34</div><div class="t" style="right:907px;top:681px;font-size:11px;font-weight:bold;color:#000;transform:scaleX(0.9750);transform-origin:right;">$330,376.61</div><div class="t" style="right:832px;top:681px;font-size:11px;font-weight:bold;color:#000;transform:scaleX(0.9750);transform-origin:right;">$331,423.61</div><div class="t" style="right:757px;top:681px;font-size:11px;font-weight:bold;color:#000;transform:scaleX(0.9750);transform-origin:right;">$322,536.09</div><div class="t" style="right:682px;top:681px;font-size:11px;font-weight:bold;color:#000;transform:scaleX(0.9750);transform-origin:right;">$327,122.89</div><div class="t" style="right:607px;top:681px;font-size:11px;font-weight:bold;color:#000;transform:scaleX(0.9750);transform-origin:right;">$327,122.89</div><div class="t" style="right:533px;top:681px;font-size:11px;font-weight:bold;color:#000;transform:scaleX(0.9750);transform-origin:right;">$395,943.03</div><div class="t" style="right:462px;top:681px;font-size:11px;font-weight:bold;color:#000;transform:scaleX(0.9750);transform-origin:right;">$423,825.00</div><div style="position:absolute;left:44px;top:716px;width:7px;height:7px;border:1px solid #a9b6cb;background:#f4f6fa;border-radius:1px"></div><div style="position:absolute;left:46px;top:720px;width:5px;height:1px;background:#1f2d4d"></div><div class="t" style="left:55px;top:701px;font-size:11px;font-weight:bold;color:#000;transform:scaleX(0.9278);transform-origin:left;">Fixed Assets</div><div class="t" style="left:68px;top:721px;font-size:11px;color:#000;transform:scaleX(1.0908);transform-origin:left;">15000 · Furniture and Equipment</div><div class="t" style="right:1156px;top:721px;font-size:11px;color:#000;transform:scaleX(0.9800);transform-origin:right;">$95,736.51</div><div class="t" style="right:1073px;top:721px;font-size:11px;color:#000;transform:scaleX(0.9800);transform-origin:right;">$95,736.51</div><div class="t" style="right:990px;top:721px;font-size:11px;color:#000;transform:scaleX(0.9800);transform-origin:right;">$95,736.51</div><div class="t" style="right:907px;top:721px;font-size:11px;color:#000;transform:scaleX(0.9800);transform-origin:right;">$95,736.51</div><div class="t" style="right:832px;top:721px;font-size:11px;color:#000;transform:scaleX(0.9800);transform-origin:right;">$95,736.51</div><div class="t" style="right:757px;top:721px;font-size:11px;color:#000;transform:scaleX(0.9800);transform-origin:right;">$95,736.51</div><div class="t" style="right:682px;top:721px;font-size:11px;color:#000;transform:scaleX(0.9800);transform-origin:right;">$95,736.51</div><div class="t" style="right:607px;top:721px;font-size:11px;color:#000;transform:scaleX(0.9800);transform-origin:right;">$95,736.51</div><div class="t" style="right:533px;top:721px;font-size:11px;color:#000;transform:scaleX(0.9800);transform-origin:right;">$95,736.51</div><div class="t" style="right:462px;top:721px;font-size:11px;color:#000;transform:scaleX(0.9800);transform-origin:right;">$95,736.51</div><div class="t" style="left:68px;top:741px;font-size:11px;color:#000;transform:scaleX(1.0917);transform-origin:left;">17000 · Accumulated Depreciation</div><div class="t" style="right:1073px;top:741px;font-size:11px;color:#000;transform:scaleX(0.9800);transform-origin:right;">($8,175.60)</div><div class="t" style="right:990px;top:741px;font-size:11px;color:#000;transform:scaleX(0.9800);transform-origin:right;">($17,986.32)</div><div class="t" style="right:907px;top:741px;font-size:11px;color:#000;transform:scaleX(0.9800);transform-origin:right;">($20,439.00)</div><div class="t" style="right:832px;top:741px;font-size:11px;color:#000;transform:scaleX(0.9800);transform-origin:right;">($22,891.68)</div><div class="t" style="right:757px;top:741px;font-size:11px;color:#000;transform:scaleX(0.9800);transform-origin:right;">($25,344.36)</div><div class="t" style="right:682px;top:741px;font-size:11px;color:#000;transform:scaleX(0.9800);transform-origin:right;">($27,797.04)</div><div class="t" style="right:607px;top:741px;font-size:11px;color:#000;transform:scaleX(0.9800);transform-origin:right;">($27,797.04)</div><div class="t" style="right:533px;top:741px;font-size:11px;color:#000;transform:scaleX(0.9800);transform-origin:right;">($36,790.20)</div><div class="t" style="right:462px;top:741px;font-size:11px;color:#000;transform:scaleX(0.9800);transform-origin:right;">($46,600.92)</div><div class="t" style="left:38px;top:761px;font-size:11px;font-weight:bold;color:#000;transform:scaleX(0.9439);transform-origin:left;">Fixed Assets Total</div><div class="t" style="right:1156px;top:761px;font-size:11px;font-weight:bold;color:#000;transform:scaleX(0.9750);transform-origin:right;">$95,736.51</div><div class="t" style="right:1073px;top:761px;font-size:11px;font-weight:bold;color:#000;transform:scaleX(0.9750);transform-origin:right;">$87,560.91</div><div class="t" style="right:990px;top:761px;font-size:11px;font-weight:bold;color:#000;transform:scaleX(0.9750);transform-origin:right;">$77,750.19</div><div class="t" style="right:907px;top:761px;font-size:11px;font-weight:bold;color:#000;transform:scaleX(0.9750);transform-origin:right;">$75,297.51</div><div class="t" style="right:832px;top:761px;font-size:11px;font-weight:bold;color:#000;transform:scaleX(0.9750);transform-origin:right;">$72,844.83</div><div class="t" style="right:757px;top:761px;font-size:11px;font-weight:bold;color:#000;transform:scaleX(0.9750);transform-origin:right;">$70,392.15</div><div class="t" style="right:682px;top:761px;font-size:11px;font-weight:bold;color:#000;transform:scaleX(0.9750);transform-origin:right;">$67,939.47</div><div class="t" style="right:607px;top:761px;font-size:11px;font-weight:bold;color:#000;transform:scaleX(0.9750);transform-origin:right;">$67,939.47</div><div class="t" style="right:533px;top:761px;font-size:11px;font-weight:bold;color:#000;transform:scaleX(0.9750);transform-origin:right;">$58,946.31</div><div class="t" style="right:462px;top:761px;font-size:11px;font-weight:bold;color:#000;transform:scaleX(0.9750);transform-origin:right;">$49,135.59</div><div style="position:absolute;left:44px;top:796px;width:7px;height:7px;border:1px solid #a9b6cb;background:#f4f6fa;border-radius:1px"></div><div style="position:absolute;left:46px;top:800px;width:5px;height:1px;background:#1f2d4d"></div><div class="t" style="left:55px;top:781px;font-size:11px;font-weight:bold;color:#000;transform:scaleX(0.9315);transform-origin:left;">Other Assets</div><div class="t" style="left:68px;top:801px;font-size:11px;color:#000;transform:scaleX(1.0618);transform-origin:left;">18000 · Security Deposit</div><div class="t" style="right:1156px;top:801px;font-size:11px;color:#000;transform:scaleX(0.9800);transform-origin:right;">$8,000.00</div><div class="t" style="right:1073px;top:801px;font-size:11px;color:#000;transform:scaleX(0.9800);transform-origin:right;">$11,490.00</div><div class="t" style="right:990px;top:801px;font-size:11px;color:#000;transform:scaleX(0.9800);transform-origin:right;">$11,490.00</div><div class="t" style="right:907px;top:801px;font-size:11px;color:#000;transform:scaleX(0.9800);transform-origin:right;">$11,490.00</div><div class="t" style="right:832px;top:801px;font-size:11px;color:#000;transform:scaleX(0.9800);transform-origin:right;">$11,490.00</div><div class="t" style="right:757px;top:801px;font-size:11px;color:#000;transform:scaleX(0.9800);transform-origin:right;">$11,490.00</div><div class="t" style="right:682px;top:801px;font-size:11px;color:#000;transform:scaleX(0.9800);transform-origin:right;">$11,490.00</div><div class="t" style="right:607px;top:801px;font-size:11px;color:#000;transform:scaleX(0.9800);transform-origin:right;">$11,490.00</div><div class="t" style="right:533px;top:801px;font-size:11px;color:#000;transform:scaleX(0.9800);transform-origin:right;">$14,980.00</div><div class="t" style="right:462px;top:801px;font-size:11px;color:#000;transform:scaleX(0.9800);transform-origin:right;">$14,980.00</div><div class="t" style="left:38px;top:821px;font-size:11px;font-weight:bold;color:#000;transform:scaleX(0.9495);transform-origin:left;">Other Assets Total</div><div class="t" style="right:1156px;top:821px;font-size:11px;font-weight:bold;color:#000;transform:scaleX(0.9750);transform-origin:right;">$8,000.00</div><div class="t" style="right:1073px;top:821px;font-size:11px;font-weight:bold;color:#000;transform:scaleX(0.9750);transform-origin:right;">$11,490.00</div><div class="t" style="right:990px;top:821px;font-size:11px;font-weight:bold;color:#000;transform:scaleX(0.9750);transform-origin:right;">$11,490.00</div><div class="t" style="right:907px;top:821px;font-size:11px;font-weight:bold;color:#000;transform:scaleX(0.9750);transform-origin:right;">$11,490.00</div><div class="t" style="right:832px;top:821px;font-size:11px;font-weight:bold;color:#000;transform:scaleX(0.9750);transform-origin:right;">$11,490.00</div><div class="t" style="right:757px;top:821px;font-size:11px;font-weight:bold;color:#000;transform:scaleX(0.9750);transform-origin:right;">$11,490.00</div><div class="t" style="right:682px;top:821px;font-size:11px;font-weight:bold;color:#000;transform:scaleX(0.9750);transform-origin:right;">$11,490.00</div><div class="t" style="right:607px;top:821px;font-size:11px;font-weight:bold;color:#000;transform:scaleX(0.9750);transform-origin:right;">$11,490.00</div><div class="t" style="right:533px;top:821px;font-size:11px;font-weight:bold;color:#000;transform:scaleX(0.9750);transform-origin:right;">$14,980.00</div><div class="t" style="right:462px;top:821px;font-size:11px;font-weight:bold;color:#000;transform:scaleX(0.9750);transform-origin:right;">$14,980.00</div><div class="t" style="left:29px;top:841px;font-size:11px;font-weight:bold;color:#000;transform:scaleX(0.9072);transform-origin:left;">ASSETS Total</div><div class="t" style="right:1156px;top:841px;font-size:11px;font-weight:bold;color:#000;transform:scaleX(0.9750);transform-origin:right;">$378,068.88</div><div class="t" style="right:1073px;top:841px;font-size:11px;font-weight:bold;color:#000;transform:scaleX(0.9750);transform-origin:right;">$395,613.00</div><div class="t" style="right:990px;top:841px;font-size:11px;font-weight:bold;color:#000;transform:scaleX(0.9750);transform-origin:right;">$414,619.53</div><div class="t" style="right:907px;top:841px;font-size:11px;font-weight:bold;color:#000;transform:scaleX(0.9750);transform-origin:right;">$417,164.12</div><div class="t" style="right:832px;top:841px;font-size:11px;font-weight:bold;color:#000;transform:scaleX(0.9750);transform-origin:right;">$415,758.44</div><div class="t" style="right:757px;top:841px;font-size:11px;font-weight:bold;color:#000;transform:scaleX(0.9750);transform-origin:right;">$404,418.24</div><div class="t" style="right:682px;top:841px;font-size:11px;font-weight:bold;color:#000;transform:scaleX(0.9750);transform-origin:right;">$406,552.36</div><div class="t" style="right:607px;top:841px;font-size:11px;font-weight:bold;color:#000;transform:scaleX(0.9750);transform-origin:right;">$406,552.36</div><div class="t" style="right:533px;top:841px;font-size:11px;font-weight:bold;color:#000;transform:scaleX(0.9750);transform-origin:right;">$469,869.34</div><div class="t" style="right:462px;top:841px;font-size:11px;font-weight:bold;color:#000;transform:scaleX(0.9750);transform-origin:right;">$487,940.59</div><div style="position:absolute;left:31px;top:876px;width:7px;height:7px;border:1px solid #a9b6cb;background:#f4f6fa;border-radius:1px"></div><div style="position:absolute;left:33px;top:880px;width:5px;height:1px;background:#1f2d4d"></div><div class="t" style="left:42px;top:861px;font-size:11px;font-weight:bold;color:#000;transform:scaleX(0.8978);transform-origin:left;">LIABILITIES &amp; EQUITY</div><div style="position:absolute;left:44px;top:896px;width:7px;height:7px;border:1px solid #a9b6cb;background:#f4f6fa;border-radius:1px"></div><div style="position:absolute;left:46px;top:900px;width:5px;height:1px;background:#1f2d4d"></div><div class="t" style="left:55px;top:881px;font-size:11px;font-weight:bold;color:#000;transform:scaleX(0.9379);transform-origin:left;">Liabilities</div><div style="position:absolute;left:57px;top:916px;width:7px;height:7px;border:1px solid #a9b6cb;background:#f4f6fa;border-radius:1px"></div><div style="position:absolute;left:59px;top:920px;width:5px;height:1px;background:#1f2d4d"></div><div class="t" style="left:68px;top:901px;font-size:11px;color:#000;transform:scaleX(1.1579);transform-origin:left;">Current Liabilities</div><div style="position:absolute;left:70px;top:936px;width:7px;height:7px;border:1px solid #a9b6cb;background:#f4f6fa;border-radius:1px"></div><div style="position:absolute;left:72px;top:940px;width:5px;height:1px;background:#1f2d4d"></div><div class="t" style="left:81px;top:921px;font-size:11px;font-weight:bold;color:#000;transform:scaleX(0.9128);transform-origin:left;">Accounts Payable</div><div class="t" style="left:94px;top:941px;font-size:11px;color:#000;transform:scaleX(1.0422);transform-origin:left;">20000 · Accounts Payable</div><div class="t" style="right:1156px;top:941px;font-size:11px;color:#000;transform:scaleX(0.9800);transform-origin:right;">$12,607.28</div><div class="t" style="right:1073px;top:941px;font-size:11px;color:#000;transform:scaleX(0.9800);transform-origin:right;">$49,075.46</div><div class="t" style="right:990px;top:941px;font-size:11px;color:#000;transform:scaleX(0.9800);transform-origin:right;">$62,264.16</div><div class="t" style="right:907px;top:941px;font-size:11px;color:#000;transform:scaleX(0.9800);transform-origin:right;">$61,859.95</div><div class="t" style="right:832px;top:941px;font-size:11px;color:#000;transform:scaleX(0.9800);transform-origin:right;">$63,941.64</div><div class="t" style="right:757px;top:941px;font-size:11px;color:#000;transform:scaleX(0.9800);transform-origin:right;">$63,778.23</div><div class="t" style="right:682px;top:941px;font-size:11px;color:#000;transform:scaleX(0.9800);transform-origin:right;">$76,375.51</div><div class="t" style="right:607px;top:941px;font-size:11px;color:#000;transform:scaleX(0.9800);transform-origin:right;">$76,375.51</div><div class="t" style="right:533px;top:941px;font-size:11px;color:#000;transform:scaleX(0.9800);transform-origin:right;">$31,554.41</div><div class="t" style="right:462px;top:941px;font-size:11px;color:#000;transform:scaleX(0.9800);transform-origin:right;">$41,272.57</div><div class="t" style="left:56px;top:961px;font-size:11px;font-weight:bold;color:#000;transform:scaleX(0.9288);transform-origin:left;">Accounts Payable Total</div><div class="t" style="right:1156px;top:961px;font-size:11px;font-weight:bold;color:#000;transform:scaleX(0.9750);transform-origin:right;">$12,607.28</div><div class="t" style="right:1073px;top:961px;font-size:11px;font-weight:bold;color:#000;transform:scaleX(0.9750);transform-origin:right;">$49,075.46</div><div class="t" style="right:990px;top:961px;font-size:11px;font-weight:bold;color:#000;transform:scaleX(0.9750);transform-origin:right;">$62,264.16</div><div class="t" style="right:907px;top:961px;font-size:11px;font-weight:bold;color:#000;transform:scaleX(0.9750);transform-origin:right;">$61,859.95</div><div class="t" style="right:832px;top:961px;font-size:11px;font-weight:bold;color:#000;transform:scaleX(0.9750);transform-origin:right;">$63,941.64</div><div class="t" style="right:757px;top:961px;font-size:11px;font-weight:bold;color:#000;transform:scaleX(0.9750);transform-origin:right;">$63,778.23</div><div class="t" style="right:682px;top:961px;font-size:11px;font-weight:bold;color:#000;transform:scaleX(0.9750);transform-origin:right;">$76,375.51</div><div class="t" style="right:607px;top:961px;font-size:11px;font-weight:bold;color:#000;transform:scaleX(0.9750);transform-origin:right;">$76,375.51</div><div class="t" style="right:533px;top:961px;font-size:11px;font-weight:bold;color:#000;transform:scaleX(0.9750);transform-origin:right;">$31,554.41</div><div class="t" style="right:462px;top:961px;font-size:11px;font-weight:bold;color:#000;transform:scaleX(0.9750);transform-origin:right;">$41,272.57</div><div style="position:absolute;left:70px;top:996px;width:7px;height:7px;border:1px solid #a9b6cb;background:#f4f6fa;border-radius:1px"></div><div style="position:absolute;left:72px;top:1000px;width:5px;height:1px;background:#1f2d4d"></div><div class="t" style="left:81px;top:981px;font-size:11px;font-weight:bold;color:#000;transform:scaleX(0.9114);transform-origin:left;">Credit Card</div><div style="position:absolute;left:83px;top:1013px;width:7px;height:7px;border:1px solid #a9b6cb;background:#f4f6fa;border-radius:1px"></div><div style="position:absolute;left:85px;top:1017px;width:5px;height:1px;background:#1f2d4d"></div><div class="t" style="left:94px;top:998px;font-size:11px;color:#000;transform:scaleX(1.0224);transform-origin:left;">21000 · Credit Cards</div><div class="t" style="left:107px;top:1014px;font-size:11px;color:#000;transform:scaleX(1.0149);transform-origin:left;">21001 · Amex Biz</div><div class="t" style="right:1156px;top:1014px;font-size:11px;color:#000;transform:scaleX(0.9800);transform-origin:right;">$58,145.61</div><div class="t" style="right:1073px;top:1014px;font-size:11px;color:#000;transform:scaleX(0.9800);transform-origin:right;">$38,807.27</div><div class="t" style="right:990px;top:1014px;font-size:11px;color:#000;transform:scaleX(0.9800);transform-origin:right;">$36,896.34</div><div class="t" style="right:907px;top:1014px;font-size:11px;color:#000;transform:scaleX(0.9800);transform-origin:right;">$39,326.54</div><div class="t" style="right:832px;top:1014px;font-size:11px;color:#000;transform:scaleX(0.9800);transform-origin:right;">$37,612.80</div><div class="t" style="right:757px;top:1014px;font-size:11px;color:#000;transform:scaleX(0.9800);transform-origin:right;">$34,011.07</div><div class="t" style="right:682px;top:1014px;font-size:11px;color:#000;transform:scaleX(0.9800);transform-origin:right;">$31,645.36</div><div class="t" style="right:607px;top:1014px;font-size:11px;color:#000;transform:scaleX(0.9800);transform-origin:right;">$31,645.36</div><div class="t" style="right:533px;top:1014px;font-size:11px;color:#000;transform:scaleX(0.9800);transform-origin:right;">$29,552.29</div><div class="t" style="right:462px;top:1014px;font-size:11px;color:#000;transform:scaleX(0.9800);transform-origin:right;">$28,949.26</div><div class="t" style="left:107px;top:1030px;font-size:11px;color:#000;transform:scaleX(1.0492);transform-origin:left;">21005 · Capital One</div><div class="t" style="right:1156px;top:1030px;font-size:11px;color:#000;transform:scaleX(0.9800);transform-origin:right;">$31,051.64</div><div class="t" style="right:1073px;top:1030px;font-size:11px;color:#000;transform:scaleX(0.9800);transform-origin:right;">$16,345.81</div><div class="t" style="right:990px;top:1030px;font-size:11px;color:#000;transform:scaleX(0.9800);transform-origin:right;">$23,824.84</div><div class="t" style="right:907px;top:1030px;font-size:11px;color:#000;transform:scaleX(0.9800);transform-origin:right;">$26,063.46</div><div class="t" style="right:832px;top:1030px;font-size:11px;color:#000;transform:scaleX(0.9800);transform-origin:right;">$31,051.29</div><div class="t" style="right:757px;top:1030px;font-size:11px;color:#000;transform:scaleX(0.9800);transform-origin:right;">$31,516.13</div><div class="t" style="right:682px;top:1030px;font-size:11px;color:#000;transform:scaleX(0.9800);transform-origin:right;">$29,256.35</div><div class="t" style="right:607px;top:1030px;font-size:11px;color:#000;transform:scaleX(0.9800);transform-origin:right;">$29,256.35</div><div class="t" style="right:533px;top:1030px;font-size:11px;color:#000;transform:scaleX(0.9800);transform-origin:right;">$45,780.59</div><div class="t" style="right:462px;top:1030px;font-size:11px;color:#000;transform:scaleX(0.9800);transform-origin:right;">$54,272.07</div><div class="t" style="left:107px;top:1046px;font-size:11px;color:#000;transform:scaleX(1.0306);transform-origin:left;">21010 · Discover</div><div class="t" style="right:1073px;top:1046px;font-size:11px;color:#000;transform:scaleX(0.9800);transform-origin:right;">$2,289.54</div><div class="t" style="right:990px;top:1046px;font-size:11px;color:#000;transform:scaleX(0.9800);transform-origin:right;">$8,474.12</div><div class="t" style="right:907px;top:1046px;font-size:11px;color:#000;transform:scaleX(0.9800);transform-origin:right;">$11,141.98</div><div class="t" style="right:832px;top:1046px;font-size:11px;color:#000;transform:scaleX(0.9800);transform-origin:right;">$9,904.20</div><div class="t" style="right:757px;top:1046px;font-size:11px;color:#000;transform:scaleX(0.9800);transform-origin:right;">$8,675.40</div><div class="t" style="right:682px;top:1046px;font-size:11px;color:#000;transform:scaleX(0.9800);transform-origin:right;">$10,931.74</div><div class="t" style="right:607px;top:1046px;font-size:11px;color:#000;transform:scaleX(0.9800);transform-origin:right;">$10,931.74</div><div class="t" style="right:533px;top:1046px;font-size:11px;color:#000;transform:scaleX(0.9800);transform-origin:right;">$17,513.97</div><div class="t" style="right:462px;top:1046px;font-size:11px;color:#000;transform:scaleX(0.9800);transform-origin:right;">$18,983.46</div><div class="t" style="left:65px;top:1062px;font-size:11px;color:#000;transform:scaleX(1.0546);transform-origin:left;">21000 · Credit Cards Total</div><div class="t" style="right:1156px;top:1062px;font-size:11px;color:#000;transform:scaleX(0.9800);transform-origin:right;">$89,197.25</div><div class="t" style="right:1073px;top:1062px;font-size:11px;color:#000;transform:scaleX(0.9800);transform-origin:right;">$57,442.62</div><div class="t" style="right:990px;top:1062px;font-size:11px;color:#000;transform:scaleX(0.9800);transform-origin:right;">$69,195.30</div><div class="t" style="right:907px;top:1062px;font-size:11px;color:#000;transform:scaleX(0.9800);transform-origin:right;">$76,531.98</div><div class="t" style="right:832px;top:1062px;font-size:11px;color:#000;transform:scaleX(0.9800);transform-origin:right;">$78,568.29</div><div class="t" style="right:757px;top:1062px;font-size:11px;color:#000;transform:scaleX(0.9800);transform-origin:right;">$74,202.60</div><div class="t" style="right:682px;top:1062px;font-size:11px;color:#000;transform:scaleX(0.9800);transform-origin:right;">$71,833.45</div><div class="t" style="right:607px;top:1062px;font-size:11px;color:#000;transform:scaleX(0.9800);transform-origin:right;">$71,833.45</div><div class="t" style="right:533px;top:1062px;font-size:11px;color:#000;transform:scaleX(0.9800);transform-origin:right;">$92,846.85</div><div class="t" style="right:462px;top:1062px;font-size:11px;color:#000;transform:scaleX(0.9800);transform-origin:right;">$102,204.79</div><div class="t" style="left:56px;top:1078px;font-size:11px;font-weight:bold;color:#000;transform:scaleX(0.9342);transform-origin:left;">Credit Card Total</div><div class="t" style="right:1156px;top:1078px;font-size:11px;font-weight:bold;color:#000;transform:scaleX(0.9750);transform-origin:right;">$89,197.25</div><div class="t" style="right:1073px;top:1078px;font-size:11px;font-weight:bold;color:#000;transform:scaleX(0.9750);transform-origin:right;">$57,442.62</div><div class="t" style="right:990px;top:1078px;font-size:11px;font-weight:bold;color:#000;transform:scaleX(0.9750);transform-origin:right;">$69,195.30</div><div class="t" style="right:907px;top:1078px;font-size:11px;font-weight:bold;color:#000;transform:scaleX(0.9750);transform-origin:right;">$76,531.98</div><div class="t" style="right:832px;top:1078px;font-size:11px;font-weight:bold;color:#000;transform:scaleX(0.9750);transform-origin:right;">$78,568.29</div><div class="t" style="right:757px;top:1078px;font-size:11px;font-weight:bold;color:#000;transform:scaleX(0.9750);transform-origin:right;">$74,202.60</div><div class="t" style="right:682px;top:1078px;font-size:11px;font-weight:bold;color:#000;transform:scaleX(0.9750);transform-origin:right;">$71,833.45</div><div class="t" style="right:607px;top:1078px;font-size:11px;font-weight:bold;color:#000;transform:scaleX(0.9750);transform-origin:right;">$71,833.45</div><div class="t" style="right:533px;top:1078px;font-size:11px;font-weight:bold;color:#000;transform:scaleX(0.9750);transform-origin:right;">$92,846.85</div><div class="t" style="right:462px;top:1078px;font-size:11px;font-weight:bold;color:#000;transform:scaleX(0.9750);transform-origin:right;">$102,204.79</div><div style="position:absolute;left:70px;top:1110px;width:7px;height:7px;border:1px solid #a9b6cb;background:#f4f6fa;border-radius:1px"></div><div style="position:absolute;left:72px;top:1114px;width:5px;height:1px;background:#1f2d4d"></div><div class="t" style="left:81px;top:1094px;font-size:11px;font-weight:bold;color:#000;transform:scaleX(0.9339);transform-origin:left;">Other Current Liabilities</div><div class="t" style="left:94px;top:1110px;font-size:11px;color:#000;transform:scaleX(1.0685);transform-origin:left;">25000 · Office Supply Line of Credit</div><div class="t" style="right:1156px;top:1110px;font-size:11px;color:#000;transform:scaleX(0.9800);transform-origin:right;">$28,264.35</div><div class="t" style="right:1073px;top:1110px;font-size:11px;color:#000;transform:scaleX(0.9800);transform-origin:right;">$20,836.35</div><div class="t" style="right:990px;top:1110px;font-size:11px;color:#000;transform:scaleX(0.9800);transform-origin:right;">$10,932.35</div><div class="t" style="right:907px;top:1110px;font-size:11px;color:#000;transform:scaleX(0.9800);transform-origin:right;">$8,332.55</div><div class="t" style="right:832px;top:1110px;font-size:11px;color:#000;transform:scaleX(0.9800);transform-origin:right;">$5,980.35</div><div class="t" style="right:757px;top:1110px;font-size:11px;color:#000;transform:scaleX(0.9800);transform-origin:right;">$3,875.75</div><div class="t" style="right:682px;top:1110px;font-size:11px;color:#000;transform:scaleX(0.9800);transform-origin:right;">$1,771.15</div><div class="t" style="right:607px;top:1110px;font-size:11px;color:#000;transform:scaleX(0.9800);transform-origin:right;">$1,771.15</div><div class="t" style="right:533px;top:1110px;font-size:11px;color:#000;transform:scaleX(0.9800);transform-origin:right;">$7,857.55</div><div class="t" style="right:462px;top:1110px;font-size:11px;color:#000;transform:scaleX(0.9800);transform-origin:right;">$58.15</div><div class="t" style="left:56px;top:1126px;font-size:11px;font-weight:bold;color:#000;transform:scaleX(0.9428);transform-origin:left;">Other Current Liabilities Total</div><div class="t" style="right:1156px;top:1126px;font-size:11px;font-weight:bold;color:#000;transform:scaleX(0.9750);transform-origin:right;">$28,264.35</div><div class="t" style="right:1073px;top:1126px;font-size:11px;font-weight:bold;color:#000;transform:scaleX(0.9750);transform-origin:right;">$20,836.35</div><div class="t" style="right:990px;top:1126px;font-size:11px;font-weight:bold;color:#000;transform:scaleX(0.9750);transform-origin:right;">$10,932.35</div><div class="t" style="right:907px;top:1126px;font-size:11px;font-weight:bold;color:#000;transform:scaleX(0.9750);transform-origin:right;">$8,332.55</div><div class="t" style="right:832px;top:1126px;font-size:11px;font-weight:bold;color:#000;transform:scaleX(0.9750);transform-origin:right;">$5,980.35</div><div class="t" style="right:757px;top:1126px;font-size:11px;font-weight:bold;color:#000;transform:scaleX(0.9750);transform-origin:right;">$3,875.75</div><div class="t" style="right:682px;top:1126px;font-size:11px;font-weight:bold;color:#000;transform:scaleX(0.9750);transform-origin:right;">$1,771.15</div><div class="t" style="right:607px;top:1126px;font-size:11px;font-weight:bold;color:#000;transform:scaleX(0.9750);transform-origin:right;">$1,771.15</div><div class="t" style="right:533px;top:1126px;font-size:11px;font-weight:bold;color:#000;transform:scaleX(0.9750);transform-origin:right;">$7,857.55</div><div class="t" style="right:462px;top:1126px;font-size:11px;font-weight:bold;color:#000;transform:scaleX(0.9750);transform-origin:right;">$58.15</div><div style="position:absolute;left:25px;top:278px;width:280px;height:33px;border:2px solid #1e6c41"></div><div style="position:absolute;left:305px;top:312px;width:5px;height:5px;background:#1e6c41"></div></div><div style="position:absolute;left:1128px;top:220px;width:22px;height:932px;background:#f0f0f0"></div><div style="position:absolute;left:1127px;top:240px;width:1px;height:912px;background:#bdbdbd"></div><div style="position:absolute;left:1129px;top:221px;width:18px;height:929px;background:#f6f6f6;border-radius:9px"></div><div style="position:absolute;left:1134px;top:225px;width:0;height:0;border-left:5px solid transparent;border-right:5px solid transparent;border-bottom:7px solid #6e6e6e"></div><div style="position:absolute;left:1134px;top:237px;width:9px;height:263px;background:#707070;border-radius:5px"></div><div style="position:absolute;left:1134px;top:1141px;width:0;height:0;border-left:5px solid transparent;border-right:5px solid transparent;border-top:7px solid #6e6e6e"></div><div style="position:absolute;left:1149px;top:220px;width:1px;height:956px;background:#d4d4d4"></div><div style="position:absolute;left:1150px;top:220px;width:385px;height:956px;background:#f0f0f0"></div><div class="t" style="left:1163px;top:227px;font-size:20px;color:#3a3a3a;transform:scaleX(1.0120);transform-origin:left;">PivotTable Fields</div><svg style="position:absolute;left:1469px;top:238px" width="16" height="10"><path d="M1.5 1.5 L8 8 L14.5 1.5" stroke="#444" stroke-width="1.2" fill="none"/></svg><svg style="position:absolute;left:1512px;top:237px" width="13" height="13"><path d="M1.5 1.5 L11.5 11.5 M11.5 1.5 L1.5 11.5" stroke="#444" stroke-width="1.2"/></svg><div class="t" style="left:1163px;top:257px;font-size:12.5px;color:#262626;transform:scaleX(0.9693);transform-origin:left;">Active</div><div style="position:absolute;left:1162px;top:292px;width:35px;height:2px;background:#1e6c41"></div><div class="t" style="left:1221px;top:257px;font-size:12.5px;color:#262626;transform:scaleX(1.0787);transform-origin:left;">All</div><div class="t" style="left:1163px;top:293px;font-size:12.5px;color:#262626;transform:scaleX(0.9494);transform-origin:left;">Choose fields to add to report:</div><div style="position:absolute;left:1483px;top:298px;width:44px;height:27px;background:#fff;border:1px solid #8a8a8a"></div><svg style="position:absolute;left:1492px;top:303px" width="18" height="18"><circle cx="9" cy="9" r="2.6" stroke="#444" stroke-width="1.1" fill="none"/><path d="M9 2 L10.3 4 L12.6 3.3 L13 5.6 L15.3 6.3 L14.2 8.4 L15.6 10.2 L13.5 11.2 L13.4 13.6 L11.1 13.4 L9.8 15.5 L8.1 14 L6 15.2 L5.3 12.9 L3 12.4 L3.8 10.2 L2.4 8.3 L4.5 7.2 L4.7 4.9 L7 5.1 Z" stroke="#444" stroke-width="1" fill="none"/></svg><div style="position:absolute;left:1515px;top:310px;width:0;height:0;border-left:4px solid transparent;border-right:4px solid transparent;border-top:4px solid #333"></div><div style="position:absolute;left:1162px;top:340px;width:365px;height:22px;background:#fff;border:1px solid #8a8a8a"></div><div class="t" style="left:1169px;top:332px;font-size:12px;color:#767676;transform:scaleX(0.8940);transform-origin:left;">Search</div><svg style="position:absolute;left:1508px;top:342px" width="18" height="18"><circle cx="10.5" cy="7" r="5" stroke="#444" stroke-width="1.1" fill="none"/><path d="M7 10.5 L2 15.5" stroke="#444" stroke-width="1.2"/></svg><div style="position:absolute;left:1162px;top:380px;width:365px;height:318px;background:#fff;border:1px solid #8a8a8a"></div><svg style="position:absolute;left:1168px;top:382px" width="12" height="14"><path d="M10 3 V10 H4" stroke="#333" stroke-width="1" fill="none"/></svg><svg style="position:absolute;left:1183px;top:382px" width="14" height="15"><path d="M12 1.5 H1.5 L7 7.5 L1.5 13.5 H12" stroke="#333" stroke-width="1.1" fill="none" stroke-linejoin="miter"/></svg><div class="t" style="left:1201px;top:371px;font-size:12px;font-weight:bold;color:#1a1a1a;transform:scaleX(0.8941);transform-origin:left;">BALANCE SHEET MEASURES</div><div style="position:absolute;left:0;top:0;width:1544px;height:1202px;clip-path:inset(381px 20px 504px 1163px)"><div style="position:absolute;left:1201px;top:401px;width:13px;height:13px;background:#1e6c41;border-radius:2px"></div><svg style="position:absolute;left:1201px;top:401px" width="13" height="13"><path d="M3 6.5 L5.5 9 L10 4" stroke="#fff" stroke-width="1.5" fill="none"/></svg><div class="t" style="left:928px;width:600px;text-align:center;top:388px;font-size:14px;color:#333;transform:scaleX(1.2855);transform-origin:center;font-family:Liberation Serif;font-style:italic;">fx</div><div class="t" style="left:1238px;top:387px;font-size:12px;font-weight:bold;color:#1a1a1a;transform:scaleX(0.9848);transform-origin:left;">Balance Sheet - Quarter</div><div style="position:absolute;left:1201px;top:425px;width:11px;height:11px;border:1px solid #5f5f5f;border-radius:2px;background:#fff"></div><div class="t" style="left:928px;width:600px;text-align:center;top:412px;font-size:14px;color:#333;transform:scaleX(1.2855);transform-origin:center;font-family:Liberation Serif;font-style:italic;">fx</div><div class="t" style="left:1238px;top:411px;font-size:12px;color:#1a1a1a;transform:scaleX(0.9670);transform-origin:left;">Compare Current YTD to Budget YTD</div><div style="position:absolute;left:1201px;top:449px;width:11px;height:11px;border:1px solid #5f5f5f;border-radius:2px;background:#fff"></div><div class="t" style="left:928px;width:600px;text-align:center;top:436px;font-size:14px;color:#333;transform:scaleX(1.2855);transform-origin:center;font-family:Liberation Serif;font-style:italic;">fx</div><div class="t" style="left:1238px;top:435px;font-size:12px;color:#1a1a1a;transform:scaleX(0.9691);transform-origin:left;">Compare Current YTD to Budget YTD %</div><div style="position:absolute;left:1201px;top:473px;width:11px;height:11px;border:1px solid #5f5f5f;border-radius:2px;background:#fff"></div><div class="t" style="left:928px;width:600px;text-align:center;top:460px;font-size:14px;color:#333;transform:scaleX(1.2855);transform-origin:center;font-family:Liberation Serif;font-style:italic;">fx</div><div class="t" style="left:1238px;top:459px;font-size:12px;color:#1a1a1a;transform:scaleX(0.9654);transform-origin:left;">Compare Current YTD to Last MTD</div><div style="position:absolute;left:1201px;top:497px;width:11px;height:11px;border:1px solid #5f5f5f;border-radius:2px;background:#fff"></div><div class="t" style="left:928px;width:600px;text-align:center;top:484px;font-size:14px;color:#333;transform:scaleX(1.2855);transform-origin:center;font-family:Liberation Serif;font-style:italic;">fx</div><div class="t" style="left:1238px;top:483px;font-size:12px;color:#1a1a1a;transform:scaleX(0.9678);transform-origin:left;">Compare Current YTD to Last MTD %</div><div style="position:absolute;left:1201px;top:521px;width:11px;height:11px;border:1px solid #5f5f5f;border-radius:2px;background:#fff"></div><div class="t" style="left:928px;width:600px;text-align:center;top:508px;font-size:14px;color:#333;transform:scaleX(1.2855);transform-origin:center;font-family:Liberation Serif;font-style:italic;">fx</div><div class="t" style="left:1238px;top:507px;font-size:12px;color:#1a1a1a;transform:scaleX(0.9695);transform-origin:left;">Compare Current YTD to Last Quarter</div><div style="position:absolute;left:1201px;top:545px;width:11px;height:11px;border:1px solid #5f5f5f;border-radius:2px;background:#fff"></div><div class="t" style="left:928px;width:600px;text-align:center;top:532px;font-size:14px;color:#333;transform:scaleX(1.2855);transform-origin:center;font-family:Liberation Serif;font-style:italic;">fx</div><div class="t" style="left:1238px;top:531px;font-size:12px;color:#1a1a1a;transform:scaleX(0.9668);transform-origin:left;">Compare Current YTD to Last Quarter %</div><div style="position:absolute;left:1201px;top:569px;width:11px;height:11px;border:1px solid #5f5f5f;border-radius:2px;background:#fff"></div><div class="t" style="left:928px;width:600px;text-align:center;top:556px;font-size:14px;color:#333;transform:scaleX(1.2855);transform-origin:center;font-family:Liberation Serif;font-style:italic;">fx</div><div class="t" style="left:1238px;top:555px;font-size:12px;color:#1a1a1a;transform:scaleX(0.9689);transform-origin:left;">Compare Current YTD to Previous Year</div><div style="position:absolute;left:1201px;top:593px;width:11px;height:11px;border:1px solid #5f5f5f;border-radius:2px;background:#fff"></div><div class="t" style="left:928px;width:600px;text-align:center;top:580px;font-size:14px;color:#333;transform:scaleX(1.2855);transform-origin:center;font-family:Liberation Serif;font-style:italic;">fx</div><div class="t" style="left:1238px;top:579px;font-size:12px;color:#1a1a1a;transform:scaleX(0.9663);transform-origin:left;">Compare Current YTD to Previous Year %</div><div style="position:absolute;left:1201px;top:617px;width:11px;height:11px;border:1px solid #5f5f5f;border-radius:2px;background:#fff"></div><div class="t" style="left:928px;width:600px;text-align:center;top:604px;font-size:14px;color:#333;transform:scaleX(1.2855);transform-origin:center;font-family:Liberation Serif;font-style:italic;">fx</div><div class="t" style="left:1238px;top:603px;font-size:12px;color:#1a1a1a;transform:scaleX(0.9605);transform-origin:left;">Compare Current YTD to Previous YTD</div><div style="position:absolute;left:1201px;top:641px;width:11px;height:11px;border:1px solid #5f5f5f;border-radius:2px;background:#fff"></div><div class="t" style="left:928px;width:600px;text-align:center;top:628px;font-size:14px;color:#333;transform:scaleX(1.2855);transform-origin:center;font-family:Liberation Serif;font-style:italic;">fx</div><div class="t" style="left:1238px;top:627px;font-size:12px;color:#1a1a1a;transform:scaleX(0.9585);transform-origin:left;">Compare Current YTD to Previous YTD %</div><div style="position:absolute;left:1201px;top:665px;width:11px;height:11px;border:1px solid #5f5f5f;border-radius:2px;background:#fff"></div><div class="t" style="left:928px;width:600px;text-align:center;top:652px;font-size:14px;color:#333;transform:scaleX(1.2855);transform-origin:center;font-family:Liberation Serif;font-style:italic;">fx</div><div class="t" style="left:1238px;top:651px;font-size:12px;color:#1a1a1a;transform:scaleX(0.9906);transform-origin:left;">Compare Last Month to Previous Year Last Month</div><div style="position:absolute;left:1201px;top:689px;width:11px;height:11px;border:1px solid #5f5f5f;border-radius:2px;background:#fff"></div><div class="t" style="left:928px;width:600px;text-align:center;top:676px;font-size:14px;color:#333;transform:scaleX(1.2855);transform-origin:center;font-family:Liberation Serif;font-style:italic;">fx</div><div class="t" style="left:1238px;top:675px;font-size:12px;color:#1a1a1a;transform:scaleX(1.0193);transform-origin:left;">Compare Last Month to Previous Year Last Mont...</div></div><div style="position:absolute;left:1515px;top:385px;width:0;height:0;border-left:5px solid transparent;border-right:5px solid transparent;border-bottom:6px solid #777"></div><div style="position:absolute;left:1515px;top:398px;width:9px;height:38px;background:#777"></div><div style="position:absolute;left:1515px;top:687px;width:0;height:0;border-left:5px solid transparent;border-right:5px solid transparent;border-top:6px solid #777"></div><div style="position:absolute;left:1164px;top:716px;width:368px;height:1px;border-top:1px dotted #b8b8b8;height:0"></div><div class="t" style="left:1166px;top:710px;font-size:12.5px;color:#262626;transform:scaleX(0.9252);transform-origin:left;">Drag fields between areas below:</div><svg style="position:absolute;left:1168px;top:755px" width="14" height="12"><path d="M1 1 H12 L8 5.5 V11 L5 9.5 V5.5 Z" fill="#8a8a8a"/></svg><div class="t" style="left:1188px;top:742px;font-size:12.5px;color:#262626;transform:scaleX(0.9109);transform-origin:left;">Filters</div><svg style="position:absolute;left:1354px;top:755px" width="12" height="12"><path d="M1 1 V11 M4 1 V11 M7 1 V11 M10 1 V11" stroke="#8a8a8a" stroke-width="1"/></svg><div class="t" style="left:1372px;top:742px;font-size:12.5px;color:#262626;transform:scaleX(0.9325);transform-origin:left;">Columns</div><svg style="position:absolute;left:1169px;top:947px" width="12" height="12"><path d="M0 2 H11 M0 5 H11 M0 8 H11 M0 11 H11" stroke="#8a8a8a" stroke-width="1"/></svg><div class="t" style="left:1188px;top:934px;font-size:12.5px;color:#262626;transform:scaleX(0.8316);transform-origin:left;">Rows</div><div class="t" style="left:1059px;width:600px;text-align:center;top:935px;font-size:13px;color:#8a8a8a;transform:scaleX(1.2427);transform-origin:center;">Σ</div><div class="t" style="left:1372px;top:934px;font-size:12.5px;color:#262626;transform:scaleX(0.9652);transform-origin:left;">Values</div><div style="position:absolute;left:1165px;top:773px;width:175px;height:159px;background:#fff"></div><div style="position:absolute;left:1349px;top:773px;width:180px;height:159px;background:#fff"></div><div style="position:absolute;left:1165px;top:965px;width:175px;height:159px;background:#fff"></div><div style="position:absolute;left:1349px;top:965px;width:180px;height:159px;background:#fff"></div><div style="position:absolute;left:1346px;top:753px;width:1px;height:371px;background:#a0a0a0"></div><div style="position:absolute;left:1165px;top:938px;width:364px;height:1px;background:#a0a0a0"></div><div style="position:absolute;left:1166px;top:775px;width:172px;height:17px;background:#fff;border:1px solid #7a7a7a"></div><div class="t" style="left:1173px;top:765px;font-size:12px;color:#262626;transform:scaleX(1.0034);transform-origin:left;">Company Name</div><svg style="position:absolute;left:1323px;top:782px" width="8" height="6"><path d="M1 1 L4 4 L7 1" stroke="#333" stroke-width="1.2" fill="none"/></svg><div style="position:absolute;left:1350px;top:775px;width:177px;height:17px;background:#fff;border:1px solid #7a7a7a"></div><div class="t" style="left:1357px;top:765px;font-size:12px;color:#262626;transform:scaleX(0.9558);transform-origin:left;">Fiscal: Year-Quarter</div><svg style="position:absolute;left:1512px;top:782px" width="8" height="6"><path d="M1 1 L4 4 L7 1" stroke="#333" stroke-width="1.2" fill="none"/></svg><div style="position:absolute;left:1166px;top:967px;width:172px;height:17px;background:#fff;border:1px solid #7a7a7a"></div><div class="t" style="left:1173px;top:957px;font-size:12px;color:#262626;transform:scaleX(0.9713);transform-origin:left;">BS Account NUMBER•NA...</div><svg style="position:absolute;left:1323px;top:974px" width="8" height="6"><path d="M1 1 L4 4 L7 1" stroke="#333" stroke-width="1.2" fill="none"/></svg><div style="position:absolute;left:1350px;top:967px;width:177px;height:17px;background:#fff;border:1px solid #7a7a7a"></div><div class="t" style="left:1357px;top:957px;font-size:12px;color:#262626;transform:scaleX(0.9505);transform-origin:left;">Balance Sheet - Quarter</div><svg style="position:absolute;left:1512px;top:974px" width="8" height="6"><path d="M1 1 L4 4 L7 1" stroke="#333" stroke-width="1.2" fill="none"/></svg><div style="position:absolute;left:1168px;top:1150px;width:11px;height:11px;border:1px solid #5f5f5f;border-radius:2px;background:#fff"></div><div class="t" style="left:1188px;top:1137px;font-size:12.5px;color:#262626;transform:scaleX(0.9362);transform-origin:left;">Defer Layout Update</div><div style="position:absolute;left:1479px;top:1144px;width:48px;height:23px;border:1px solid #d8d8d8;background:#f0f0f0"></div><div class="t" style="left:1203px;width:600px;text-align:center;top:1137px;font-size:12.5px;color:#a6a6a6;transform:scaleX(0.9426);transform-origin:center;">Update</div><div style="position:absolute;left:1px;top:1151px;width:1148px;height:28px;background:#f0f0f0"></div><div style="position:absolute;left:1px;top:1151px;width:1128px;height:1px;background:#c8c8c8"></div><div style="position:absolute;left:17px;top:1152px;width:685px;height:26px;background:#f3f3f3"></div><div style="position:absolute;left:28px;top:1161px;width:0;height:0;border-top:4px solid transparent;border-bottom:4px solid transparent;border-right:4px solid #1e6c41"></div><div style="position:absolute;left:57px;top:1161px;width:0;height:0;border-top:4px solid transparent;border-bottom:4px solid transparent;border-left:4px solid #1e6c41"></div><div style="position:absolute;left:82px;top:1167px;width:2px;height:2px;background:#1e6c41"></div><div style="position:absolute;left:86px;top:1167px;width:2px;height:2px;background:#1e6c41"></div><div style="position:absolute;left:90px;top:1167px;width:2px;height:2px;background:#1e6c41"></div><div style="position:absolute;left:101px;top:1155px;width:1px;height:21px;background:#c8c8c8"></div><div class="t" style="left:117px;top:1145px;font-size:12.5px;color:#404040;transform:scaleX(1.0080);transform-origin:left;">Balance Sheet w Budget</div><div style="position:absolute;left:272px;top:1155px;width:1px;height:21px;background:#c8c8c8"></div><div class="t" style="left:287px;top:1145px;font-size:12.5px;color:#404040;transform:scaleX(1.0119);transform-origin:left;">Balance Sheet by Year</div><div style="position:absolute;left:432px;top:1152px;width:178px;height:24px;background:#fff"></div><div style="position:absolute;left:431px;top:1174px;width:180px;height:2px;background:#1e6c41"></div><div class="t" style="left:443px;top:1145px;font-size:12.5px;font-weight:bold;color:#1e6c41;transform:scaleX(1.0187);transform-origin:left;">Balance Sheet by Quarter</div><div style="position:absolute;left:629px;top:1167px;width:2px;height:2px;background:#333"></div><div style="position:absolute;left:633px;top:1167px;width:2px;height:2px;background:#333"></div><div style="position:absolute;left:637px;top:1167px;width:2px;height:2px;background:#333"></div><svg style="position:absolute;left:653px;top:1156px" width="18" height="18"><circle cx="9" cy="9" r="7.5" stroke="#555" stroke-width="1.1" fill="none"/><path d="M9 5 V13 M5 9 H13" stroke="#555" stroke-width="1.1"/></svg><div style="position:absolute;left:689px;top:1159px;width:2px;height:2px;background:#333"></div><div style="position:absolute;left:689px;top:1164px;width:2px;height:2px;background:#333"></div><div style="position:absolute;left:689px;top:1169px;width:2px;height:2px;background:#333"></div><div style="position:absolute;left:705px;top:1157px;width:424px;height:16px;background:#f6f6f6;border-radius:8px"></div><div style="position:absolute;left:710px;top:1159px;width:0;height:0;border-top:5px solid transparent;border-bottom:5px solid transparent;border-right:6px solid #6e6e6e"></div><div style="position:absolute;left:722px;top:1160px;width:358px;height:9px;background:#707070;border-radius:5px"></div><div style="position:absolute;left:1119px;top:1159px;width:0;height:0;border-top:5px solid transparent;border-bottom:5px solid transparent;border-left:6px solid #6e6e6e"></div><div style="position:absolute;left:1px;top:1179px;width:1542px;height:22px;background:#f3f3f3"></div><div class="t" style="left:10px;top:1171px;font-size:12px;color:#404040;transform:scaleX(0.8937);transform-origin:left;">Ready</div><svg style="position:absolute;left:58px;top:1183px" width="17" height="15"><path d="M10 12.5 H1.5 V1.5 H14.5 V5" stroke="#333" stroke-width="1.1" fill="none"/><path d="M1.5 3.5 H14.5 M3.5 6.5 H6 M3.5 9 H6" stroke="#333" stroke-width="1.1"/><circle cx="10.5" cy="9.5" r="4" stroke="#333" stroke-width="1.1" fill="#f3f3f3"/><circle cx="10.5" cy="9.5" r="1.6" fill="#333"/></svg><svg style="position:absolute;left:90px;top:1182px" width="16" height="17"><circle cx="7" cy="2.8" r="1.8" stroke="#333" stroke-width="1.1" fill="none"/><path d="M1.5 5 C3.5 6.5 10.5 6.5 12.5 5 M7 6.3 C6.5 9 6 12 5 15.5" stroke="#333" stroke-width="1.1" fill="none"/><path d="M9 10.5 L14.5 16 M14.5 10.5 L9 16" stroke="#333" stroke-width="1.1"/></svg><div class="t" style="left:109px;top:1171px;font-size:12px;color:#404040;transform:scaleX(0.9457);transform-origin:left;">Accessibility: Investigate</div><div style="position:absolute;left:1232px;top:1179px;width:40px;height:22px;background:#dcdcdc"></div><svg style="position:absolute;left:1244px;top:1182px" width="15" height="15"><path d="M1.5 1.5 H13.5 V13.5 H1.5 Z M5.5 1.5 V13.5 M9.5 1.5 V13.5 M1.5 5.5 H13.5 M1.5 9.5 H13.5" stroke="#333" stroke-width="1" fill="none"/></svg><svg style="position:absolute;left:1284px;top:1182px" width="16" height="16" shape-rendering="crispEdges"><path d="M1.5 1.5 H14.5 V14.5 H1.5 Z M3.5 3.5 H12.5 V12.5 H3.5 Z M5 6.5 H11 M5 8.5 H11 M5 10.5 H11" stroke="#333" stroke-width="1" fill="none"/></svg><svg style="position:absolute;left:1324px;top:1182px" width="15" height="15"><path d="M1.5 1.5 H13.5 V13.5 H1.5 Z M5.5 1.5 V8.5 H9.5 V1.5" stroke="#333" stroke-width="1" fill="none"/></svg><div style="position:absolute;left:1357px;top:1189px;width:9px;height:1px;background:#444"></div><div style="position:absolute;left:1371px;top:1189px;width:100px;height:1px;background:#8a8a8a"></div><div style="position:absolute;left:1418px;top:1184px;width:5px;height:11px;background:#5a5a5a"></div><div style="position:absolute;left:1475px;top:1189px;width:10px;height:1px;background:#444"></div><div style="position:absolute;left:1479px;top:1184px;width:1px;height:10px;background:#444"></div><div class="t" style="left:1497px;top:1171px;font-size:12px;color:#404040;transform:scaleX(0.8794);transform-origin:left;">100%</div><div style="position:absolute;left:0px;top:0px;width:1542px;height:1200px;border:1px solid #1e7145;pointer-events:none"></div></body></html>
